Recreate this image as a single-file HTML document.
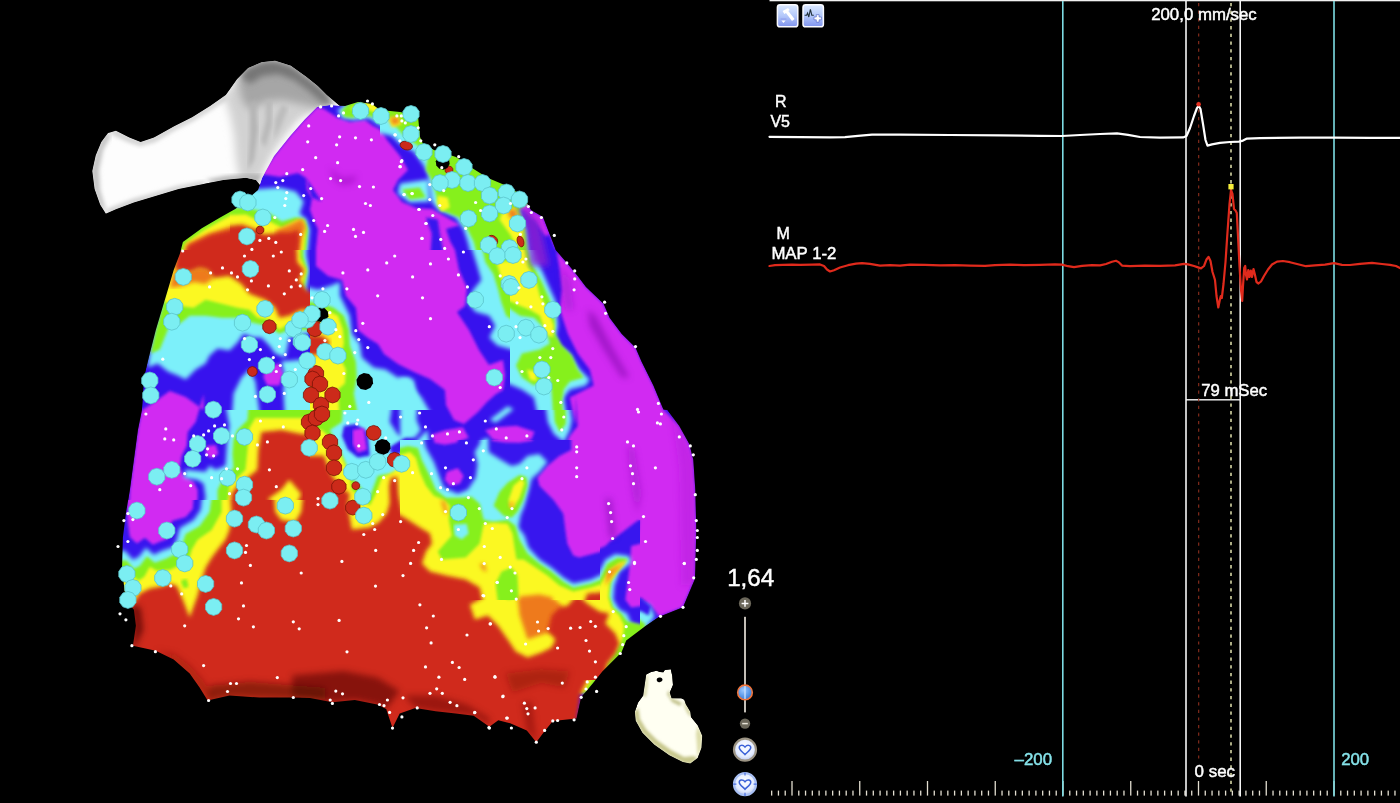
<!DOCTYPE html>
<html lang="en"><head><meta charset="utf-8"><title>Activation map</title>
<style>
html,body{margin:0;padding:0;background:#000;}
body{width:1400px;height:803px;overflow:hidden;position:relative;font-family:"Liberation Sans",Arial,Helvetica,sans-serif;color:#fff;}
svg{position:absolute;left:0;top:0;display:block;}
.t{position:absolute;white-space:nowrap;line-height:1;color:#fff;}
</style></head><body>

<svg width="1400" height="803" viewBox="0 0 1400 803" font-family="Liberation Sans, Arial, Helvetica, sans-serif">
<defs>
<filter id="b1" x="-5%" y="-5%" width="110%" height="110%"><feGaussianBlur stdDeviation="1.2"/></filter>
<filter id="b15" x="-5%" y="-5%" width="110%" height="110%"><feGaussianBlur stdDeviation="1.5"/></filter>
<filter id="b2" x="-5%" y="-5%" width="110%" height="110%"><feGaussianBlur stdDeviation="2"/></filter>
<filter id="b3" x="-5%" y="-5%" width="110%" height="110%"><feGaussianBlur stdDeviation="3"/></filter>
<filter id="b4" x="-20%" y="-20%" width="140%" height="140%"><feGaussianBlur stdDeviation="4"/></filter>
<filter id="b5" x="-10%" y="-10%" width="120%" height="120%"><feGaussianBlur stdDeviation="5"/></filter>
<filter id="b8" x="-20%" y="-20%" width="140%" height="140%"><feGaussianBlur stdDeviation="8"/></filter>
<filter id="s05" x="-5%" y="-5%" width="110%" height="110%"><feGaussianBlur stdDeviation="0.5"/></filter>
<mask id="sil" maskUnits="userSpaceOnUse" x="0" y="0" width="1400" height="803"><polygon points="317.0,107.0 330.0,105.0 345.0,106.0 358.0,102.0 372.0,104.0 380.0,110.0 400.0,112.0 418.0,116.0 420.0,137.0 423.0,144.0 434.0,150.0 456.0,157.0 472.0,168.0 488.0,178.0 507.0,186.0 523.0,196.0 531.0,210.0 543.0,217.0 555.8,250.0 567.8,264.0 577.7,276.0 586.0,287.0 603.6,303.8 609.6,317.7 621.6,333.7 635.5,347.6 641.5,361.6 653.4,385.5 663.4,409.4 667.4,410.0 679.3,426.0 689.3,443.9 693.3,459.8 695.3,489.7 696.3,529.5 695.3,569.4 694.9,578.9 683.0,607.3 659.3,616.8 645.1,626.3 626.2,640.5 621.5,652.3 602.5,671.2 593.1,683.1 581.2,697.3 576.5,718.6 552.8,720.9 543.4,732.8 536.3,742.2 526.8,730.4 510.2,723.3 498.3,720.2 489.4,726.7 473.7,715.7 455.7,713.5 435.6,711.3 415.4,707.9 399.7,713.5 392.5,728.0 386.2,709.0 377.3,704.5 354.8,700.0 332.4,702.3 310.0,698.0 293.3,697.5 259.4,697.5 229.5,695.5 207.6,700.5 199.6,687.5 189.7,673.6 173.7,659.6 155.8,650.7 132.9,645.7 135.9,625.8 133.9,609.8 125.9,599.9 122.0,570.0 122.9,537.5 125.9,513.6 129.9,489.7 133.9,459.8 137.9,430.0 141.9,410.0 143.9,377.5 149.8,353.6 155.8,330.0 161.8,310.0 167.8,290.0 173.7,270.0 179.9,253.7 182.9,242.1 201.8,228.2 219.7,217.8 235.7,208.8 250.0,197.0 258.0,190.0 262.0,178.0 274.0,156.0 290.0,136.0 305.0,119.0" fill="#fff"/></mask>
<clipPath id="tubeclip"><polygon points="92.3,171.0 95.7,155.4 101.3,142.0 108.0,133.0 115.9,130.7 129.3,137.5 140.6,142.0 154.0,137.5 174.2,126.3 192.1,117.3 210.1,106.1 225.8,94.9 237.0,79.2 248.2,68.0 261.7,62.3 275.1,60.8 290.8,65.7 306.5,76.9 317.7,85.9 326.7,94.9 345.0,110.0 325.0,135.0 300.0,160.0 280.0,185.0 262.0,188.0 256.0,180.0 246.0,177.8 223.5,180.0 201.1,184.6 178.7,189.0 156.3,195.8 133.8,202.5 115.9,209.2 105.8,213.7 100.2,204.7 94.6,189.0"/></clipPath>
<clipPath id="heartclip"><path d="M646.2,674.4 L651,672 L656.6,670.7 L660,672 L663.3,672.2 L664.8,670 L670.8,669.2 L672.3,676 L673,685 L669.8,692.4 L671.6,698.3 L681.3,698.3 L684.3,699.8 L685.8,704.3 L690.3,711.8 L691,717 L697.7,725.3 L702.2,735.7 L701.5,747.7 L697.7,758.1 L690.3,763.4 L682.8,761.9 L669.3,755.2 L654.4,744.7 L642.4,732.7 L635.7,720.8 L634.9,711.8 L637.9,702.8 L643.2,695.4 L644.7,684.9 Z"/></clipPath>
<linearGradient id="ic" x1="0" y1="0" x2="0" y2="1"><stop offset="0" stop-color="#dbe9ff"/><stop offset="0.5" stop-color="#b4c8fa"/><stop offset="1" stop-color="#7f93ee"/></linearGradient>
<radialGradient id="knob" cx="0.4" cy="0.35" r="0.7"><stop offset="0" stop-color="#9cc8ff"/><stop offset="1" stop-color="#2f78d8"/></radialGradient>
<radialGradient id="hb1" cx="0.5" cy="0.4" r="0.6"><stop offset="0" stop-color="#ffffff"/><stop offset="0.7" stop-color="#e4ecff"/><stop offset="1" stop-color="#b8c4e8"/></radialGradient>
</defs>
<g clip-path="url(#tubeclip)">
<polygon points="92.3,171.0 95.7,155.4 101.3,142.0 108.0,133.0 115.9,130.7 129.3,137.5 140.6,142.0 154.0,137.5 174.2,126.3 192.1,117.3 210.1,106.1 225.8,94.9 237.0,79.2 248.2,68.0 261.7,62.3 275.1,60.8 290.8,65.7 306.5,76.9 317.7,85.9 326.7,94.9 345.0,110.0 325.0,135.0 300.0,160.0 280.0,185.0 262.0,188.0 256.0,180.0 246.0,177.8 223.5,180.0 201.1,184.6 178.7,189.0 156.3,195.8 133.8,202.5 115.9,209.2 105.8,213.7 100.2,204.7 94.6,189.0" fill="#fdfdfd" />
<g filter="url(#b4)"><polygon points="224.0,96.0 237.0,79.0 248.0,68.0 262.0,62.0 275.0,61.0 291.0,66.0 306.0,77.0 318.0,86.0 327.0,95.0 333.0,106.0 318.0,112.0 300.0,120.0 286.0,136.0 272.0,156.0 262.0,176.0 250.0,182.0 240.0,181.0 236.0,160.0 234.0,135.0 230.0,115.0" fill="#d2d2d2" /></g>
<g filter="url(#b4)"><polygon points="238.0,80.0 248.0,68.0 262.0,62.0 275.0,61.0 291.0,66.0 306.0,77.0 318.0,86.0 327.0,95.0 333.0,106.0 318.0,108.0 300.0,104.0 282.0,100.0 264.0,102.0 250.0,110.0 242.0,100.0" fill="#a6a6a6" /></g>
<g filter="url(#b3)"><polygon points="240.0,76.0 248.0,68.0 262.0,62.0 275.0,61.0 291.0,66.0 306.0,77.0 318.0,86.0 327.0,95.0 333.0,106.0 322.0,102.0 308.0,90.0 294.0,80.0 278.0,74.0 262.0,76.0 250.0,84.0" fill="#767676" /></g>
<g filter="url(#b2)"><polygon points="250.0,104.0 256.0,100.0 258.0,130.0 254.0,160.0 248.0,170.0 250.0,135.0" fill="#b4b4b4" /></g>
<g filter="url(#b2)"><polygon points="266.0,100.0 272.0,100.0 272.0,125.0 265.0,148.0 261.0,140.0 266.0,120.0" fill="#b8b8b8" /></g>
<g filter="url(#b2)"><polygon points="282.0,104.0 288.0,108.0 281.0,126.0 274.0,140.0 275.0,120.0" fill="#bcbcbc" /></g>
<g filter="url(#b3)"><polygon points="300.0,120.0 320.0,110.0 332.0,107.0 298.0,132.0 282.0,152.0 270.0,172.0 264.0,174.0 278.0,148.0" fill="#f6f6f6" /></g>
<g filter="url(#b2)"><polygon points="215.0,183.0 246.0,179.0 258.0,183.0 262.0,174.0 250.0,174.0 226.0,176.0 205.0,180.0" fill="#b2b2b2" /></g>
<g filter="url(#b2)"><polygon points="105.0,215.0 134.0,204.0 156.0,197.0 179.0,190.0 205.0,185.0 205.0,181.0 178.0,186.0 155.0,193.0 133.0,199.0 108.0,209.0" fill="#cacaca" /></g>
<g filter="url(#b2)"><polygon points="91.0,171.0 95.0,155.0 100.0,142.0 107.0,132.0 111.0,136.0 103.0,150.0 99.0,170.0 100.0,190.0 107.0,214.0 99.0,205.0 93.6,189.0" fill="#c2c2c2" /></g>
<g filter="url(#b2)"><polygon points="108.0,132.0 116.0,129.5 129.0,136.5 141.0,141.0 154.0,136.5 174.0,125.0 192.0,116.0 210.0,105.0 226.0,94.0 228.0,99.0 211.0,110.0 193.0,121.0 175.0,130.0 155.0,142.0 140.0,146.0 128.0,142.0 115.0,136.0" fill="#cfcfcf" /></g>
</g>
<g mask="url(#sil)">
<polygon points="317.0,107.0 330.0,105.0 345.0,106.0 358.0,102.0 372.0,104.0 380.0,110.0 400.0,112.0 418.0,116.0 420.0,137.0 423.0,144.0 434.0,150.0 456.0,157.0 472.0,168.0 488.0,178.0 507.0,186.0 523.0,196.0 531.0,210.0 543.0,217.0 555.8,250.0 567.8,264.0 577.7,276.0 586.0,287.0 603.6,303.8 609.6,317.7 621.6,333.7 635.5,347.6 641.5,361.6 653.4,385.5 663.4,409.4 667.4,410.0 679.3,426.0 689.3,443.9 693.3,459.8 695.3,489.7 696.3,529.5 695.3,569.4 694.9,578.9 683.0,607.3 659.3,616.8 645.1,626.3 626.2,640.5 621.5,652.3 602.5,671.2 593.1,683.1 581.2,697.3 576.5,718.6 552.8,720.9 543.4,732.8 536.3,742.2 526.8,730.4 510.2,723.3 498.3,720.2 489.4,726.7 473.7,715.7 455.7,713.5 435.6,711.3 415.4,707.9 399.7,713.5 392.5,728.0 386.2,709.0 377.3,704.5 354.8,700.0 332.4,702.3 310.0,698.0 293.3,697.5 259.4,697.5 229.5,695.5 207.6,700.5 199.6,687.5 189.7,673.6 173.7,659.6 155.8,650.7 132.9,645.7 135.9,625.8 133.9,609.8 125.9,599.9 122.0,570.0 122.9,537.5 125.9,513.6 129.9,489.7 133.9,459.8 137.9,430.0 141.9,410.0 143.9,377.5 149.8,353.6 155.8,330.0 161.8,310.0 167.8,290.0 173.7,270.0 179.9,253.7 182.9,242.1 201.8,228.2 219.7,217.8 235.7,208.8 250.0,197.0 258.0,190.0 262.0,178.0 274.0,156.0 290.0,136.0 305.0,119.0" fill="#3712ee" />
<g filter="url(#b15)">
<polygon points="317.0,107.0 305.0,119.0 290.0,136.0 274.0,156.0 262.0,174.0 280.0,177.0 298.0,173.0 306.0,178.0 307.0,190.0 312.0,198.0 310.0,210.0 314.0,221.0 318.0,229.0 316.0,249.0 316.0,266.0 328.0,276.0 342.0,280.0 346.0,296.0 356.0,308.0 358.0,330.0 368.0,338.0 378.0,344.0 384.0,354.0 398.0,364.0 414.0,372.0 430.0,379.0 445.0,390.0 446.0,405.0 454.0,420.0 464.0,424.0 478.0,412.0 487.0,402.0 496.0,394.0 503.0,390.0 505.0,375.0 503.0,360.0 489.0,365.0 479.0,350.0 469.0,330.0 457.0,312.0 465.0,306.0 467.0,288.0 459.0,270.0 455.0,250.0 450.0,241.0 446.0,229.0 460.0,225.0 446.0,217.0 432.0,209.0 416.0,208.0 402.0,202.0 393.0,190.0 398.0,180.0 408.0,170.0 400.0,156.0 392.0,146.0 387.0,140.0 381.0,130.0 373.0,126.0 365.0,120.0 350.0,122.0 338.0,118.0 324.0,109.0" fill="#d12cf2" />
<polygon points="514.0,204.0 523.0,196.0 531.0,210.0 543.0,217.0 555.8,250.0 567.8,264.0 577.7,276.0 586.0,287.0 603.6,303.8 609.6,317.7 621.6,333.7 635.5,347.6 641.5,361.6 653.4,385.5 663.4,409.4 679.3,426.0 689.3,443.9 693.3,459.8 695.3,489.7 696.3,529.5 695.3,569.4 694.9,578.9 683.0,607.3 659.3,616.8 652.2,607.3 640.4,597.9 626.2,602.6 621.5,590.8 628.6,574.2 633.3,560.0 631.5,585.3 633.5,553.4 637.5,539.5 639.5,519.6 629.5,526.5 612.6,539.5 605.6,547.5 595.7,553.4 579.7,555.4 569.8,549.4 567.8,533.5 561.8,521.6 563.8,505.6 557.8,493.7 543.9,487.7 535.9,475.7 545.9,465.8 557.8,455.8 565.8,445.9 569.8,435.9 577.7,425.9 575.7,394.1 575.7,425.3 569.8,397.4 577.7,393.4 593.7,385.5 589.7,369.5 577.7,353.6 567.8,333.7 559.8,309.8 561.8,289.8 559.8,269.9 553.8,234.1 545.0,236.0 535.0,222.0 524.0,212.0" fill="#d12cf2" />
<polygon points="141.9,410.0 143.9,409.0 155.8,401.0 169.8,391.0 185.7,397.0 199.6,407.0 203.6,410.0 203.6,394.1 195.7,422.0 187.7,431.9 186.7,445.9 181.7,455.8 179.7,467.8 183.7,475.7 193.7,481.7 197.6,489.7 197.6,499.6 192.7,509.6 185.7,519.6 171.8,521.6 163.8,527.5 151.8,537.5 139.9,534.5 132.9,541.5 127.9,531.5 129.9,489.7 133.9,459.8 137.9,429.9" fill="#d12cf2" />
<polygon points="265.4,367.5 279.3,363.5 283.3,373.5 279.3,385.5 267.4,385.5 263.4,377.5" fill="#d12cf2" />
<polygon points="206.6,445.9 215.6,444.9 218.6,453.8 211.6,458.8 205.6,453.8" fill="#d12cf2" />
<polygon points="431.4,434.7 444.8,430.3 462.8,427.3 468.8,437.7 456.8,442.2 444.8,444.5 434.4,441.5" fill="#d12cf2" />
<polygon points="485.2,430.3 495.7,427.3 516.6,425.8 534.5,431.7 531.5,439.2 519.6,443.0 504.6,442.2 492.7,439.2" fill="#d12cf2" />
<polygon points="447.5,467.8 461.4,465.8 469.4,475.7 457.4,483.7 447.5,477.7" fill="#d12cf2" />
<polygon points="352.8,429.9 363.8,427.9 366.8,449.8 357.8,452.8 352.8,443.9" fill="#d12cf2" />
</g>
<g filter="url(#b2)">
<polygon points="400.0,377.9 413.5,379.4 417.9,397.4 416.4,419.8 420.9,430.3 414.9,437.7 400.0,440.7" fill="#7cf0fa" />
<polygon points="480.7,440.7 488.2,437.7 489.7,449.7 483.7,455.7" fill="#7cf0fa" />
<polygon points="489.7,419.8 507.6,406.3 513.6,409.3 495.7,422.8" fill="#7cf0fa" />
</g>
<clipPath id="tc_X1"><rect x="100" y="80" width="130" height="170"/></clipPath>
<g clip-path="url(#tc_X1)">
<g filter="url(#b2)">
<polygon points="150.0,170.0 237.6,170.0 237.6,257.6 150.0,257.6" fill="#7cf0fa" />
</g>
<g filter="url(#b15)">
<polygon points="150.0,170.0 237.6,170.0 237.6,257.6 150.0,257.6" fill="#86f01c" />
</g>
<g filter="url(#b15)">
<polygon points="237.6,212.2 220.7,220.8 202.8,231.0 184.9,243.7 181.9,257.6 237.6,257.6" fill="#fbf822" />
</g>
<g filter="url(#b2)">
<polygon points="237.6,223.8 209.8,233.3 186.9,244.1 183.5,257.6 237.6,257.6" fill="#ee7a1c" />
</g>
<g filter="url(#b2)">
<polygon points="237.6,228.2 209.8,234.9 187.8,245.7 184.3,257.6 237.6,257.6" fill="#d0291b" />
</g>
</g>
<clipPath id="tc_A2"><rect x="230" y="80" width="150" height="170"/></clipPath>
<g clip-path="url(#tc_A2)">
<g filter="url(#b2)">
<polygon points="214.1,201.6 236.0,197.6 251.9,189.6 279.8,187.6 295.7,191.6 303.7,201.6 299.7,213.5 306.7,219.5 309.7,229.4 306.7,265.3 214.1,265.3" fill="#7cf0fa" />
<polygon points="337.6,109.9 341.6,117.9 353.5,119.9 369.4,117.9 377.4,123.9 389.4,129.8 397.3,137.8 403.3,147.8 409.3,157.7 417.3,167.7 445.9,173.7 445.9,102.0 417.3,102.0 369.4,98.0 349.5,102.0" fill="#7cf0fa" />
<polygon points="401.3,183.6 445.9,179.6 445.9,205.5 409.3,202.5 399.3,195.6" fill="#7cf0fa" />
</g>
<g filter="url(#b15)">
<polygon points="305.7,177.6 321.6,201.6 311.7,197.6" fill="#3712ee" />
</g>
<g filter="url(#b15)">
<polygon points="214.1,209.5 242.0,207.5 253.9,209.5 269.8,213.5 281.8,221.5 295.7,217.5 304.7,219.5 307.7,229.4 304.7,265.3 214.1,265.3" fill="#86f01c" />
<polygon points="341.6,110.9 344.5,116.9 353.5,117.9 357.5,113.9 369.4,115.9 381.4,119.9 393.3,121.9 405.3,129.8 401.3,137.8 409.3,147.8 417.3,155.7 445.9,159.7 445.9,102.0 417.3,102.0 369.4,98.0 349.5,102.0" fill="#86f01c" />
<polygon points="404.3,188.6 421.2,187.6 445.9,189.6 445.9,201.6 411.3,199.6 403.3,194.6" fill="#86f01c" />
</g>
<g filter="url(#b15)">
<polygon points="214.1,215.5 245.9,214.5 255.9,219.5 269.8,221.5 281.8,227.5 297.7,219.5 303.7,220.5 305.7,229.4 302.7,265.3 214.1,265.3" fill="#fbf822" />
<polygon points="349.5,107.9 357.5,111.9 369.4,109.9 381.4,115.9 389.4,119.9 399.3,123.9 405.3,121.9 409.3,115.9 401.3,113.9 381.4,107.9 369.4,102.0" fill="#fbf822" />
</g>
<g filter="url(#b2)">
<polygon points="275.8,230.4 289.8,224.5 302.1,218.7 305.7,227.5 300.9,239.4 298.1,265.3 279.8,265.3" fill="#ee7a1c" />
</g>
<g filter="url(#b2)">
<polygon points="214.1,227.5 242.0,224.5 255.9,229.4 263.9,234.4 279.8,232.4 289.8,232.4 298.7,229.4 299.7,239.4 296.7,265.3 214.1,265.3" fill="#d0291b" />
<polygon points="387.4,113.9 395.3,119.9 401.3,121.9 405.3,117.9 399.3,113.9" fill="#d0291b" />
</g>
</g>
<clipPath id="tc_B2"><rect x="380" y="80" width="340" height="170"/></clipPath>
<g clip-path="url(#tc_B2)">
<g filter="url(#b2)">
<polygon points="364.1,129.8 392.0,135.8 399.9,143.8 413.9,151.8 423.8,165.7 427.8,173.7 429.8,185.6 431.8,201.6 437.8,209.5 455.7,217.5 463.7,229.4 467.6,241.4 473.6,265.3 531.4,265.3 527.4,229.4 519.4,207.5 531.4,201.6 507.5,177.6 455.7,149.8 419.8,109.9 364.1,102.0" fill="#7cf0fa" />
<polygon points="399.9,183.6 427.8,179.6 429.8,201.6 409.9,202.5 397.9,193.6" fill="#7cf0fa" />
</g>
<g filter="url(#b15)">
<polygon points="425.8,217.5 437.8,219.5 439.8,233.4 445.7,265.3 429.8,265.3 431.8,233.4" fill="#3712ee" />
</g>
<g filter="url(#b15)">
<polygon points="364.1,102.0 392.0,121.9 403.9,135.8 417.8,145.8 427.8,157.7 425.8,169.7 431.8,179.6 435.8,193.6 439.8,209.5 459.7,217.5 467.6,229.4 473.6,241.4 479.6,265.3 529.4,265.3 525.4,229.4 519.4,209.5 531.4,201.6 507.5,177.6 455.7,149.8 419.8,109.9" fill="#86f01c" />
<polygon points="401.9,189.6 419.8,187.6 425.8,197.6 409.9,199.6" fill="#86f01c" />
</g>
<g filter="url(#b15)">
<polygon points="388.0,117.9 397.9,115.9 401.9,123.9 392.0,127.8" fill="#fbf822" />
<polygon points="437.8,195.6 447.7,197.6 449.7,207.5 441.8,211.5 436.8,203.5" fill="#fbf822" />
<polygon points="503.5,209.5 515.5,207.5 523.4,229.4 523.4,243.4 517.5,247.4 509.5,233.4 499.5,219.5" fill="#fbf822" />
</g>
<g filter="url(#b2)">
<polygon points="390.0,117.9 397.9,116.9 399.9,122.9 392.9,124.9" fill="#ee7a1c" />
<polygon points="507.5,209.5 515.5,209.5 517.5,219.5 509.5,217.5" fill="#ee7a1c" />
</g>
</g>
<clipPath id="tc_R2C1"><rect x="100" y="250" width="210" height="160"/></clipPath>
<g clip-path="url(#tc_R2C1)">
<g filter="url(#b2)">
<polygon points="149.8,353.6 147.8,367.5 157.8,363.5 167.8,371.5 177.7,375.5 185.7,379.5 195.7,369.5 205.6,363.5 209.6,355.6 217.6,348.6 229.5,350.6 237.5,342.6 243.5,333.7 253.4,337.6 261.4,337.6 269.4,345.6 275.3,353.6 285.3,357.6 289.3,337.6 325.9,329.7 325.9,316.7 308.2,299.8 306.6,287.8 309.2,269.9 306.6,256.0 307.2,222.1 179.7,222.1 169.8,269.9" fill="#7cf0fa" />
<polygon points="231.5,425.3 233.5,393.4 241.5,377.5 249.4,369.5 255.4,381.5 257.4,397.4 261.4,425.3" fill="#7cf0fa" />
<polygon points="281.3,361.6 325.9,357.6 325.9,425.3 285.3,425.3 283.3,389.4 285.3,377.5" fill="#7cf0fa" />
</g>
<g filter="url(#b15)">
<polygon points="179.7,222.1 161.8,309.8 159.8,317.7 169.8,321.7 179.7,323.7 189.7,315.7 205.6,315.7 221.6,317.7 237.5,317.7 249.4,321.7 257.4,323.7 267.4,325.7 279.3,333.7 289.3,329.7 325.9,329.7 325.9,318.7 306.2,299.8 304.2,287.8 307.2,269.9 303.2,256.0 303.6,222.1" fill="#86f01c" />
<polygon points="161.8,309.8 169.8,317.7 167.8,329.7 159.8,349.6 150.8,353.6 155.8,329.7" fill="#86f01c" />
</g>
<g filter="url(#b15)">
<polygon points="179.7,222.1 163.8,301.8 177.7,305.8 193.7,307.8 205.6,299.8 221.6,303.8 237.5,307.8 249.4,309.8 257.4,317.7 269.4,319.7 279.3,329.7 289.3,323.7 325.9,315.7 304.2,299.8 302.2,287.8 306.2,269.9 300.2,258.0 300.2,222.1" fill="#fbf822" />
</g>
<g filter="url(#b2)">
<polygon points="173.7,271.9 189.7,271.9 199.6,267.9 207.6,269.9 213.6,277.9 205.6,283.9 193.7,281.9 181.7,285.9 169.8,287.8" fill="#ee7a1c" />
</g>
<g filter="url(#b2)">
<polygon points="179.7,222.1 174.7,269.9 189.7,271.9 199.6,267.9 207.6,269.9 213.6,277.9 229.5,275.9 241.5,283.9 249.4,293.8 265.4,299.8 275.3,307.8 279.3,317.7 289.3,315.7 301.2,309.8 325.9,309.8 325.9,297.8 306.2,289.8 299.2,279.9 304.2,269.9 297.3,262.0 295.3,222.1" fill="#d0291b" />
</g>
</g>
<clipPath id="tc_R2C2"><rect x="310" y="250" width="200" height="160"/></clipPath>
<g clip-path="url(#tc_R2C2)">
<g filter="url(#b2)">
<polygon points="294.1,283.9 318.0,289.8 329.9,285.9 339.9,281.9 339.9,295.8 345.9,307.8 349.8,315.7 351.8,333.7 359.8,343.6 361.8,357.6 373.7,367.5 385.7,369.5 397.6,377.5 409.6,377.5 413.6,389.4 421.6,397.4 437.5,425.3 437.5,429.3 294.1,429.3" fill="#7cf0fa" />
<polygon points="467.4,234.1 477.3,265.9 481.3,279.9 473.3,289.8 467.4,301.8 475.3,311.8 489.3,315.7 495.3,325.7 489.3,337.6 497.3,345.6 525.9,353.6 525.9,234.1" fill="#7cf0fa" />
</g>
<g filter="url(#b15)">
<polygon points="294.1,299.8 322.0,303.8 333.9,307.8 343.9,315.7 348.8,329.7 349.8,345.6 355.8,361.6 356.8,377.5 353.8,393.4 359.8,425.3 359.8,429.3 294.1,429.3" fill="#86f01c" />
<polygon points="479.3,234.1 485.3,262.0 493.3,273.9 498.2,289.8 501.2,301.8 506.2,315.7 525.9,329.7 525.9,234.1" fill="#86f01c" />
</g>
<g filter="url(#b15)">
<polygon points="294.1,307.8 325.9,309.8 337.9,315.7 342.9,329.7 343.9,343.6 339.9,357.6 345.9,369.5 344.9,383.5 337.9,389.4 339.9,425.3 339.9,429.3 294.1,429.3" fill="#fbf822" />
<polygon points="496.3,262.0 525.9,260.0 525.9,301.8 506.2,289.8 501.2,277.9" fill="#fbf822" />
</g>
<g filter="url(#b2)">
<polygon points="294.1,333.7 322.0,335.7 329.9,341.6 323.9,353.6 294.1,357.6" fill="#d0291b" />
</g>
</g>
<clipPath id="tc_R2C3"><rect x="510" y="250" width="210" height="160"/></clipPath>
<g clip-path="url(#tc_R2C3)">
<g filter="url(#b2)">
<polygon points="494.1,234.1 529.9,234.1 539.9,265.9 547.8,283.9 555.8,301.8 557.8,325.7 555.8,335.7 559.8,345.6 569.8,353.6 579.7,369.5 589.7,379.5 585.7,385.5 569.8,389.4 563.8,397.4 567.8,425.3 539.9,425.3 533.9,397.4 522.0,389.4 494.1,377.5" fill="#7cf0fa" />
</g>
<g filter="url(#b15)">
<polygon points="494.1,234.1 523.9,234.1 531.9,263.9 541.9,281.9 549.8,299.8 554.8,319.7 554.8,333.7 561.8,345.6 571.8,355.6 577.7,369.5 583.7,377.5 569.8,381.5 563.8,389.4 561.8,401.4 564.8,425.3 553.8,425.3 551.8,393.4 549.8,377.5 533.9,385.5 522.0,377.5 516.0,365.5 522.0,353.6 539.9,349.6 549.8,343.6 545.9,329.7 533.9,317.7 520.0,315.7 494.1,297.8" fill="#86f01c" />
</g>
<g filter="url(#b15)">
<polygon points="494.1,234.1 522.0,234.1 527.9,265.9 535.9,279.9 539.9,295.8 547.8,309.8 553.8,325.7 552.8,337.6 545.9,333.7 539.9,315.7 529.9,309.8 520.0,305.8 494.1,293.8" fill="#fbf822" />
<polygon points="526.9,369.5 535.9,371.5 536.9,381.5 529.9,379.5" fill="#fbf822" />
</g>
</g>
<clipPath id="tc_R3C1"><rect x="100" y="410" width="210" height="160"/></clipPath>
<g clip-path="url(#tc_R3C1)">
<g filter="url(#b2)">
<polygon points="223.5,394.1 229.5,425.9 227.5,435.9 226.5,449.8 225.5,465.8 215.6,469.8 209.6,465.8 205.6,471.8 185.7,469.8 183.7,477.7 197.6,479.7 203.6,483.7 205.6,497.6 201.6,511.6 193.7,521.6 177.7,529.5 169.8,537.5 167.8,545.5 153.8,549.4 141.9,545.5 131.9,553.4 125.9,547.5 118.0,591.3 325.9,591.3 325.9,394.1" fill="#7cf0fa" />
</g>
<g filter="url(#b15)">
<polygon points="249.4,394.1 247.5,420.0 237.5,429.9 233.5,439.9 232.5,453.8 233.5,467.8 221.6,481.7 217.6,489.7 217.6,503.6 213.6,513.6 203.6,523.5 189.7,529.5 179.7,537.5 175.7,549.4 159.8,557.4 145.9,555.4 133.9,563.4 126.9,559.4 118.0,591.3 325.9,591.3 325.9,394.1" fill="#86f01c" />
<polygon points="122.0,525.5 127.9,527.5 126.9,559.4 121.0,585.3" fill="#86f01c" />
</g>
<g filter="url(#b15)">
<polygon points="255.4,418.0 249.4,427.9 247.5,449.8 245.5,469.8 229.5,485.7 227.5,503.6 223.5,515.6 209.6,527.5 197.6,533.5 189.7,545.5 181.7,557.4 159.8,565.4 149.8,591.3 325.9,591.3 325.9,418.0" fill="#fbf822" />
</g>
<g filter="url(#b2)">
<polygon points="261.4,431.9 258.4,449.8 257.4,469.8 237.5,485.7 231.5,493.7 230.5,513.6 229.5,529.5 231.5,537.5 221.6,545.5 213.6,553.4 203.6,557.4 195.7,591.3 325.9,591.3 325.9,435.9 301.2,433.9 281.3,429.9" fill="#d0291b" />
</g>
<g filter="url(#b2)">
<polygon points="289.3,479.7 301.2,493.7 297.3,503.6 295.3,515.6 281.3,521.6 273.3,521.6 275.3,503.6 267.4,499.6 281.3,489.7" fill="#fbf822" />
</g>
</g>
<clipPath id="tc_R3C2"><rect x="310" y="410" width="200" height="160"/></clipPath>
<g clip-path="url(#tc_R3C2)">
<g filter="url(#b2)">
<polygon points="294.1,394.1 393.7,394.1 389.7,422.0 397.6,433.9 405.6,437.9 389.7,449.8 393.7,455.8 417.6,439.9 427.5,429.9 429.5,445.9 437.5,461.8 439.5,477.7 449.4,489.7 465.4,491.7 475.3,479.7 483.3,461.8 489.3,455.8 525.9,469.8 525.9,585.3 294.1,585.3" fill="#7cf0fa" />
</g>
<g filter="url(#b15)">
<polygon points="343.9,425.9 355.8,423.9 367.8,431.9 369.8,455.8 357.8,457.8 347.8,449.8 341.9,435.9" fill="#3712ee" />
<polygon points="389.7,447.8 405.6,437.9 417.6,439.9 395.7,454.8" fill="#3712ee" />
</g>
<g filter="url(#b15)">
<polygon points="352.8,429.9 363.8,427.9 366.8,449.8 357.8,452.8 352.8,443.9" fill="#d12cf2" />
</g>
<g filter="url(#b15)">
<polygon points="294.1,394.1 343.9,394.1 341.9,422.0 329.9,429.9 337.9,445.9 344.9,461.8 349.8,475.7 369.8,497.6 377.7,475.7 389.7,473.7 399.6,469.8 407.6,457.8 417.6,445.9 421.6,449.8 425.5,461.8 429.5,477.7 437.5,493.7 449.4,497.6 469.4,497.6 489.3,503.6 525.9,501.6 525.9,521.6 489.3,517.6 525.9,533.5 525.9,585.3 294.1,585.3" fill="#86f01c" />
</g>
<g filter="url(#b15)">
<polygon points="453.4,523.5 465.4,525.5 463.4,537.5 455.4,537.5" fill="#7cf0fa" />
<polygon points="489.3,517.6 525.9,509.6 525.9,521.6 497.3,523.5" fill="#7cf0fa" />
</g>
<g filter="url(#b15)">
<polygon points="294.1,427.9 322.0,429.9 335.9,443.9 343.9,461.8 349.8,475.7 351.8,489.7 369.8,505.6 375.7,493.7 381.7,477.7 393.7,471.8 405.6,461.8 413.6,449.8 418.6,455.8 421.6,469.8 427.5,481.7 433.5,497.6 437.5,505.6 449.4,503.6 453.4,517.6 447.5,529.5 449.4,545.5 439.5,557.4 437.5,585.3 294.1,585.3" fill="#fbf822" />
<polygon points="477.3,537.5 489.3,523.5 525.9,521.6 525.9,585.3 467.4,585.3 469.4,549.4" fill="#fbf822" />
</g>
<g filter="url(#b2)">
<polygon points="294.1,455.8 323.9,455.8 331.9,475.7 343.9,489.7 349.8,493.7 347.8,505.6 351.8,529.5 369.8,527.5 378.7,522.5 386.7,513.6 389.7,503.6 389.1,485.7 390.7,477.7 397.3,476.7 398.6,495.7 401.6,509.6 406.6,518.6 414.6,527.5 429.5,533.5 431.5,545.5 421.6,553.4 418.6,585.3 294.1,585.3" fill="#d0291b" />
</g>
</g>
<clipPath id="tc_R3C3"><rect x="510" y="410" width="210" height="160"/></clipPath>
<g clip-path="url(#tc_R3C3)">
<g filter="url(#b2)">
<polygon points="543.9,394.1 547.8,422.0 553.8,433.9 563.8,441.9 569.8,429.9 571.8,420.0 567.8,394.1 566.8,390.1 541.9,390.1" fill="#7cf0fa" />
<polygon points="494.1,465.8 522.0,455.8 531.9,450.8 543.9,459.8 535.9,469.8 530.9,481.7 528.9,497.6 524.9,513.6 529.9,529.5 528.9,541.5 537.9,549.4 549.8,557.4 561.8,563.4 569.8,585.3 569.8,591.3 494.1,591.3" fill="#7cf0fa" />
<polygon points="597.6,585.3 603.6,549.4 611.6,541.5 621.6,547.5 631.5,557.4 631.5,591.3 597.6,591.3" fill="#7cf0fa" />
</g>
<g filter="url(#b15)">
<polygon points="552.8,390.1 554.8,422.0 559.8,431.9 565.8,423.9 565.8,390.1" fill="#86f01c" />
<polygon points="494.1,475.7 520.0,471.8 527.9,476.7 525.9,493.7 520.0,509.6 512.0,517.6 494.1,517.6" fill="#86f01c" />
<polygon points="494.1,553.4 522.0,551.4 535.9,557.4 549.8,561.4 557.8,585.3 557.8,591.3 494.1,591.3" fill="#86f01c" />
<polygon points="601.6,591.3 607.6,553.4 615.6,549.4 625.5,555.4 629.5,561.4 629.5,591.3" fill="#86f01c" />
</g>
<g filter="url(#b15)">
<polygon points="494.1,481.7 518.0,475.7 524.9,479.7 522.0,495.7 514.0,509.6 494.1,509.6" fill="#fbf822" />
<polygon points="605.6,591.3 613.6,557.4 627.5,559.4 628.5,591.3" fill="#fbf822" />
</g>
<g filter="url(#b2)">
<polygon points="609.6,591.3 617.6,563.4 628.5,561.4 627.5,591.3" fill="#ee7a1c" />
</g>
<g filter="url(#b2)">
<polygon points="494.1,503.6 516.0,497.6 514.0,509.6 494.1,511.6" fill="#d0291b" />
</g>
</g>
<clipPath id="tc_R4C1"><rect x="100" y="570" width="210" height="190"/></clipPath>
<g clip-path="url(#tc_R4C1)">
<g filter="url(#b2)">
<polygon points="82.1,552.1 327.1,552.1 327.1,775.2 82.1,775.2" fill="#7cf0fa" />
</g>
<g filter="url(#b15)">
<polygon points="82.1,552.1 327.1,552.1 327.1,775.2 82.1,775.2" fill="#86f01c" />
</g>
<g filter="url(#b15)">
<polygon points="129.9,554.1 135.9,589.9 143.9,593.9 153.8,582.0 157.8,554.1" fill="#fbf822" />
<polygon points="167.8,554.1 175.7,582.0 183.7,591.9 189.7,613.8 195.7,595.9 199.6,580.0 217.6,554.1" fill="#fbf822" />
<polygon points="82.1,552.1 327.1,552.1 327.1,775.2 82.1,775.2" fill="#fbf822" />
</g>
<g filter="url(#b15)">
<polygon points="131.9,554.1 139.9,582.0 149.8,576.0 153.8,554.1" fill="#86f01c" />
<polygon points="177.7,554.1 180.7,580.0 186.7,587.9 189.7,578.0 187.7,554.1" fill="#86f01c" />
</g>
<g filter="url(#b2)">
<polygon points="116.0,745.3 116.0,612.8 129.9,607.8 139.9,593.9 149.8,591.9 157.8,585.9 169.8,589.9 175.7,583.9 183.7,593.9 189.7,609.8 193.7,595.9 197.6,582.0 209.6,554.1 325.9,554.1 325.9,745.3 129.9,745.3" fill="#d0291b" />
</g>
</g>
<clipPath id="tc_R4C2"><rect x="310" y="570" width="200" height="190"/></clipPath>
<g clip-path="url(#tc_R4C2)">
<g filter="url(#b2)">
<polygon points="289.8,549.8 529.7,549.8 529.7,771.8 289.8,771.8" fill="#7cf0fa" />
</g>
<g filter="url(#b15)">
<polygon points="289.8,549.8 529.7,549.8 529.7,771.8 289.8,771.8" fill="#86f01c" />
</g>
<g filter="url(#b15)">
<polygon points="289.8,549.8 529.7,549.8 529.7,771.8 289.8,771.8" fill="#fbf822" />
</g>
<g filter="url(#b15)">
<polygon points="498.3,579.0 527.9,574.5 527.9,596.9 500.6,592.4" fill="#86f01c" />
</g>
<g filter="url(#b2)">
<polygon points="280.9,545.3 419.9,545.3 419.9,552.1 431.1,581.2 444.5,579.0 458.0,576.7 471.4,583.5 484.9,594.7 475.9,608.1 467.0,610.4 475.9,621.6 489.4,619.3 500.6,628.3 527.9,644.0 527.9,767.3 280.9,767.3" fill="#d0291b" />
</g>
</g>
<clipPath id="tc_R4C3"><rect x="510" y="570" width="210" height="190"/></clipPath>
<g clip-path="url(#tc_R4C3)">
<g filter="url(#b2)">
<polygon points="543.4,560.0 550.5,569.5 564.7,581.3 578.9,586.0 593.1,583.7 600.2,569.5 604.9,560.0 633.3,560.0 628.6,574.2 621.5,583.7 623.8,593.1 635.7,600.2 649.9,605.0 654.6,616.8 645.1,628.6 588.3,692.5 458.2,692.5 458.2,560.0" fill="#7cf0fa" />
</g>
<g filter="url(#b15)">
<polygon points="614.4,583.7 623.8,577.8 630.9,589.6 626.2,602.6 640.4,597.9 651.1,606.2 648.7,615.6 640.4,610.9 630.9,614.4 621.5,613.3 614.4,605.0 612.0,593.1" fill="#3712ee" />
</g>
<g filter="url(#b15)">
<polygon points="526.8,560.0 536.3,569.5 548.1,578.9 562.3,586.0 578.9,590.8 595.4,588.4 602.5,576.6 608.5,567.1 612.0,569.5 609.6,583.7 607.3,597.9 612.0,612.1 621.5,619.2 635.7,616.8 645.1,623.9 645.1,628.6 588.3,692.5 458.2,692.5 458.2,560.0" fill="#86f01c" />
</g>
<g filter="url(#b15)">
<polygon points="470.0,567.1 484.2,560.0 496.0,560.0 498.4,583.7 505.5,597.9 515.0,600.2 517.3,583.7 516.2,567.1 529.2,564.7 538.6,574.2 550.5,583.7 564.7,589.6 578.9,594.3 595.4,592.0 602.5,581.3 609.6,571.8 612.0,586.0 609.6,600.2 614.4,614.4 621.5,623.9 623.8,638.1 619.1,649.9 602.5,666.5 593.1,678.3 583.6,692.5 458.2,692.5 458.2,567.1" fill="#fbf822" />
<polygon points="604.9,564.7 630.9,564.7 626.2,576.6 612.0,578.9" fill="#fbf822" />
</g>
<g filter="url(#b2)">
<polygon points="520.9,601.4 541.0,595.5 557.6,607.3 550.5,619.2 545.7,631.0 536.3,638.1 526.8,631.0 522.1,616.8" fill="#ee7a1c" />
<polygon points="602.5,583.7 621.5,569.5 628.6,571.8 612.0,586.0" fill="#ee7a1c" />
</g>
<g filter="url(#b2)">
<polygon points="470.0,581.3 481.8,583.7 486.6,595.5 479.5,607.3 470.0,609.7 458.2,609.7 458.2,581.3" fill="#d0291b" />
<polygon points="470.0,621.5 484.2,614.4 496.0,628.6 507.9,638.1 517.3,652.3 526.8,659.4 541.0,654.7 550.5,638.1 548.1,628.6 557.6,614.4 569.4,605.0 578.9,597.9 588.3,607.3 602.5,612.1 609.6,619.2 612.0,631.0 607.3,645.2 597.8,659.4 590.7,673.6 581.2,692.5 576.5,725.7 574.1,761.2 458.2,761.2 458.2,621.5" fill="#d0291b" />
</g>
</g>
<clipPath id="tc_Q1"><rect x="440" y="520" width="200" height="160"/></clipPath>
<g clip-path="url(#tc_Q1)">
<g filter="url(#b1)">
<polygon points="408.1,488.1 671.9,488.1 671.9,715.2 408.1,715.2" fill="#3712ee" />
</g>
<g filter="url(#b15)">
<polygon points="561.5,504.1 611.3,504.1 613.3,537.9 605.3,545.9 591.4,551.9 579.4,557.8 571.5,551.9 567.5,539.9" fill="#d12cf2" />
<polygon points="610.3,488.1 671.9,488.1 671.9,502.1 636.6,521.2 611.5,540.5 609.3,532.0" fill="#d12cf2" />
<polygon points="631.2,545.9 655.9,539.9 655.9,603.7 631.2,607.6 625.3,599.7 627.3,585.7 629.2,569.8" fill="#d12cf2" />
</g>
<g filter="url(#b2)">
<polygon points="424.1,504.1 525.7,504.1 529.6,532.0 535.6,539.9 545.6,545.9 551.6,559.8 561.5,571.8 569.5,579.8 579.4,581.8 593.4,583.7 599.4,571.8 605.3,559.8 615.3,553.9 629.2,555.9 631.2,562.8 619.3,571.8 614.3,585.7 613.3,599.7 619.3,609.6 627.3,613.6 631.2,623.6 655.9,631.6 655.9,695.9 424.1,695.9" fill="#7cf0fa" />
</g>
<g filter="url(#b15)">
<polygon points="424.1,504.1 519.7,504.1 521.7,532.0 517.7,545.9 519.7,555.9 533.6,557.8 547.6,563.8 555.5,573.8 565.5,583.7 579.4,586.7 595.4,587.7 601.4,575.8 607.3,563.8 617.3,557.8 628.2,558.8 619.3,568.8 611.3,579.8 609.3,595.7 613.3,607.6 621.3,613.6 627.3,621.6 655.9,627.6 655.9,695.9 424.1,695.9" fill="#86f01c" />
</g>
<g filter="url(#b15)">
<polygon points="452.0,525.0 465.9,524.0 467.9,533.9 457.9,537.9 451.0,532.0" fill="#7cf0fa" />
</g>
<g filter="url(#b15)">
<polygon points="424.1,504.1 448.0,504.1 450.0,528.0 424.1,532.0" fill="#fbf822" />
<polygon points="477.8,504.1 505.7,504.1 505.7,532.0 499.8,549.9 497.8,565.8 495.8,579.8 499.8,589.7 507.7,599.7 515.7,597.7 516.7,579.8 513.7,569.8 523.7,567.8 539.6,571.8 551.6,577.8 563.5,587.7 579.4,590.7 595.4,591.7 603.3,579.8 609.3,569.8 619.3,562.8 627.3,560.8 617.3,571.8 609.3,583.7 608.3,597.7 611.3,607.6 619.3,615.6 624.3,625.6 622.3,639.5 615.3,651.5 607.3,663.4 599.4,695.9 424.1,695.9 424.1,565.8 448.0,559.8 459.9,557.8 471.9,547.9 479.8,532.0" fill="#fbf822" />
</g>
<g filter="url(#b2)">
<polygon points="517.7,597.7 543.6,593.7 555.5,599.7 563.5,607.6 559.5,619.6 551.6,631.6 539.6,635.5 527.6,639.5 519.7,615.6" fill="#ee7a1c" />
<polygon points="607.3,571.8 625.3,561.8 613.3,573.8 605.3,585.7" fill="#ee7a1c" />
</g>
<g filter="url(#b2)">
<polygon points="424.1,576.8 455.9,572.8 467.9,577.8 483.8,589.7 482.8,597.7 469.9,604.7 474.9,619.6 487.8,615.6 497.8,625.6 507.7,639.5 515.7,651.5 527.6,657.5 541.6,652.5 551.6,647.5 555.5,639.5 547.6,631.6 551.6,615.6 559.5,607.6 567.5,605.7 577.5,594.7 587.4,603.7 599.4,611.6 609.3,613.6 605.3,623.6 615.3,633.5 619.3,643.5 615.3,653.5 607.3,663.4 599.4,695.9 424.1,695.9" fill="#d0291b" />
</g>
</g>
<clipPath id="tc_Q2"><rect x="100" y="500" width="210" height="160"/></clipPath>
<g clip-path="url(#tc_Q2)">
<g filter="url(#b1)">
<polygon points="78.1,468.1 341.9,468.1 341.9,695.2 78.1,695.2" fill="#3712ee" />
</g>
<g filter="url(#b15)">
<polygon points="126.9,484.1 194.7,484.1 192.7,509.0 185.7,516.9 171.8,520.9 169.8,529.9 167.8,538.8 159.8,541.8 152.8,544.8 144.9,537.8 136.9,543.4 129.9,536.9 127.5,519.9" fill="#d12cf2" />
</g>
<g filter="url(#b2)">
<polygon points="203.6,484.1 200.6,510.0 193.7,519.9 179.7,527.9 176.7,539.8 173.7,546.8 161.8,550.8 153.8,554.8 145.9,547.8 138.9,556.8 132.9,559.8 124.9,550.8 94.1,551.8 94.1,675.9 325.9,675.9 325.9,484.1" fill="#7cf0fa" />
</g>
<g filter="url(#b15)">
<polygon points="213.6,484.1 209.6,512.0 199.6,525.9 185.7,533.9 181.7,545.8 177.7,552.8 165.8,558.8 154.8,562.7 146.9,556.2 139.9,565.7 133.9,568.7 126.9,560.8 94.1,557.8 94.1,675.9 325.9,675.9 325.9,484.1" fill="#86f01c" />
</g>
<g filter="url(#b15)">
<polygon points="221.6,484.1 221.6,512.0 211.6,529.9 197.6,539.8 191.7,549.8 188.7,559.8 176.7,566.7 169.8,569.7 156.8,570.7 149.8,566.7 144.3,576.7 138.3,580.7 130.9,573.7 94.1,575.7 94.1,675.9 325.9,675.9 325.9,484.1" fill="#fbf822" />
</g>
<g filter="url(#b15)">
<polygon points="180.7,580.7 186.7,578.7 188.7,586.7 183.7,588.6" fill="#86f01c" />
</g>
<g filter="url(#b2)">
<polygon points="229.5,484.1 231.5,512.0 229.5,529.9 225.5,539.8 217.6,549.8 211.6,557.8 205.6,567.7 200.6,583.7 197.6,595.6 189.7,617.5 182.7,599.6 176.7,585.7 169.8,583.7 159.8,586.7 149.8,588.6 139.9,593.6 132.9,603.6 94.1,611.6 94.1,675.9 325.9,675.9 325.9,484.1" fill="#d0291b" />
</g>
<g filter="url(#b2)">
<polygon points="273.3,484.1 275.3,512.0 281.3,519.9 295.3,521.9 301.2,512.0 304.2,484.1" fill="#fbf822" />
</g>
</g>
<clipPath id="tc_Q3"><rect x="400" y="440" width="200" height="160"/></clipPath>
<g clip-path="url(#tc_Q3)">
<g filter="url(#b1)">
<polygon points="368.1,408.1 631.9,408.1 631.9,635.2 368.1,635.2" fill="#3712ee" />
</g>
<g filter="url(#b15)">
<polygon points="571.3,424.1 615.9,424.1 615.9,547.6 579.3,557.5 573.3,555.5 567.3,543.6 565.3,529.6 563.3,513.7 553.4,499.8 539.4,485.8 537.5,477.8 547.4,465.9 559.4,455.9 571.3,450.0" fill="#d12cf2" />
<polygon points="446.8,471.9 457.8,467.9 463.7,475.9 459.8,483.8 449.8,485.8 444.8,479.8" fill="#d12cf2" />
<polygon points="434.3,442.8 444.8,444.8 456.8,442.4 468.7,421.9 468.7,408.1 431.3,408.1 431.3,418.9" fill="#d12cf2" />
<polygon points="492.0,440.8 504.6,442.6 519.5,442.8 532.5,440.8 537.5,408.1 487.6,408.1" fill="#d12cf2" />
</g>
<g filter="url(#b2)">
<polygon points="384.1,424.1 419.9,424.1 425.9,448.0 433.9,461.9 439.8,477.8 443.8,487.8 457.8,493.8 467.7,489.8 475.7,477.8 477.7,463.9 474.7,452.0 479.7,444.0 483.7,424.1 487.6,424.1 488.6,452.0 499.6,458.9 511.6,465.9 519.5,463.9 527.5,455.9 539.4,453.9 547.4,461.9 539.4,471.9 531.5,478.8 528.5,491.8 524.5,505.7 520.5,515.7 518.5,527.6 524.5,535.6 528.5,547.6 539.4,559.5 551.4,567.5 563.3,577.5 573.3,583.4 591.2,579.4 615.9,567.5 615.9,615.9 384.1,615.9" fill="#7cf0fa" />
</g>
<g filter="url(#b15)">
<polygon points="384.1,452.0 408.0,446.0 417.9,448.0 421.9,459.9 429.9,475.9 435.9,489.8 445.8,497.8 459.8,497.8 471.7,496.8 479.7,503.7 483.7,519.7 493.6,521.7 507.6,519.7 515.5,525.7 519.5,539.6 527.5,553.5 539.4,563.5 551.4,571.5 563.3,581.4 573.3,587.4 591.2,583.4 615.9,573.5 615.9,615.9 384.1,615.9" fill="#86f01c" />
<polygon points="493.6,505.7 499.6,491.8 507.6,482.8 519.5,474.9 526.5,476.9 527.5,485.8 523.5,499.8 517.5,511.7 511.6,517.7 503.6,515.7" fill="#86f01c" />
</g>
<g filter="url(#b15)">
<polygon points="453.8,524.7 466.7,523.7 468.7,533.6 461.8,539.6 454.8,535.6" fill="#7cf0fa" />
</g>
<g filter="url(#b15)">
<polygon points="384.1,459.9 410.0,452.0 415.9,457.9 419.9,471.9 425.9,485.8 433.9,495.8 443.8,499.8 449.8,505.7 448.8,519.7 451.8,535.6 437.8,551.6 441.8,559.5 465.7,557.5 479.7,543.6 483.7,523.7 493.6,522.7 507.6,523.7 512.5,533.6 514.5,547.6 516.5,559.5 523.5,559.5 535.5,567.5 547.4,575.5 559.4,585.4 573.3,591.4 591.2,587.4 615.9,579.4 615.9,615.9 384.1,615.9" fill="#fbf822" />
<polygon points="508.6,499.8 513.5,485.8 521.5,478.8 524.5,482.8 519.5,497.8 513.5,507.7 509.6,507.7" fill="#fbf822" />
</g>
<g filter="url(#b15)">
<polygon points="499.6,615.9 495.6,583.4 501.6,571.5 511.6,567.5 517.5,575.5 519.5,615.9" fill="#86f01c" />
</g>
<g filter="url(#b2)">
<polygon points="440.8,499.8 444.8,501.8 447.8,513.7 444.8,512.7" fill="#ee7a1c" />
<polygon points="479.7,563.5 484.7,564.5 486.7,572.5 482.7,569.5" fill="#ee7a1c" />
<polygon points="510.0,502.7 513.1,502.2 512.7,507.7 510.0,507.3" fill="#ee7a1c" />
<polygon points="516.5,615.9 519.5,596.6 539.4,594.6 552.4,597.4 554.4,615.9" fill="#ee7a1c" />
</g>
<g filter="url(#b2)">
<polygon points="384.1,505.7 408.0,519.7 419.9,527.6 429.9,533.6 431.9,543.6 425.9,551.6 421.9,563.5 429.9,571.5 445.8,575.5 465.7,579.4 479.7,587.4 485.7,615.9 384.1,615.9" fill="#d0291b" />
<polygon points="579.3,615.9 587.3,593.4 615.9,591.4 615.9,615.9" fill="#d0291b" />
</g>
</g>
<g filter="url(#b3)">
<polygon points="129.9,603.6 139.9,607.6 142.9,629.5 135.9,645.4 131.5,648.4 137.9,627.5 135.5,611.6" fill="#2a0402" opacity="0.6"/>
<polygon points="587.7,309.8 595.7,315.7 613.6,349.6 629.5,377.5 621.6,377.5 603.6,349.6 589.7,325.7" fill="#6a0c98" opacity="0.45"/>
<polygon points="560.8,265.9 569.8,279.9 573.7,309.8 565.8,309.8 562.2,289.8" fill="#7a18c0" opacity="0.35"/>
<polygon points="627.5,445.9 634.5,449.8 641.5,493.7 637.5,513.6 632.5,493.7" fill="#8a14b8" opacity="0.4"/>
<polygon points="605.6,497.6 611.6,499.6 615.6,537.5 609.6,537.5" fill="#5a0c90" opacity="0.4"/>
<polygon points="669.4,394.1 695.3,459.8 696.3,585.3 681.3,585.3 679.3,469.8" fill="#a81cd0" opacity="0.35"/>
<polygon points="209.6,685.5 249.4,681.6 325.9,687.5 325.9,699.5 229.5,696.5 207.6,700.5" fill="#5a0c06" opacity="0.55"/>
<polygon points="129.9,605.9 139.9,607.8 141.9,629.8 133.9,643.7 132.3,629.8" fill="#5a0c06" opacity="0.5"/>
<polygon points="155.8,650.7 173.7,659.6 189.7,673.6 199.6,687.5 207.6,699.5 213.6,697.5 203.6,681.6 189.7,665.6 173.7,653.7" fill="#7a140a" opacity="0.45"/>
<polygon points="292.1,675.4 343.6,670.9 377.3,677.6 399.7,691.1 386.2,709.0 377.3,704.5 354.8,700.0 332.4,702.3 292.1,696.7" fill="#4a0804" opacity="0.55"/>
<polygon points="404.2,695.6 435.6,695.6 467.0,704.5 489.4,718.0 489.4,724.7 473.7,715.7 435.6,711.3 415.4,707.9" fill="#5a0c06" opacity="0.45"/>
<polygon points="505.5,673.6 541.0,668.9 569.4,671.2 564.7,687.8 541.0,683.1 512.6,692.5" fill="#7a140a" opacity="0.4"/>
<polygon points="522.1,702.0 531.5,702.0 536.3,742.2 526.8,730.4" fill="#6a1008" opacity="0.4"/>
<polygon points="329.6,167.7 341.6,177.6 357.5,175.7 353.5,183.6 341.6,185.6 333.6,179.6" fill="#8a10b0" opacity="0.4"/>
<polygon points="517.5,205.5 526.4,229.4 530.4,265.9 549.3,265.9 539.4,221.5 528.4,209.5" fill="#8a22d0" opacity="0.85"/>
</g>
</g>
<polygon points="452.8,171.2 451.4,173.2 449.1,174.0 446.7,173.3 445.2,171.3 445.2,168.8 446.6,166.8 448.9,166.0 451.3,166.7 452.8,168.7" fill="#cc2a1a" stroke="#7a1208" stroke-width="0.8"/>
<polygon points="276.1,328.8 273.6,332.3 269.5,333.7 265.4,332.4 262.8,329.0 262.7,324.6 265.2,321.1 269.3,319.7 273.4,321.0 276.0,324.4" fill="#cc2a1a" stroke="#7a1208" stroke-width="0.8"/>
<polygon points="257.2,373.0 255.4,375.5 252.5,376.5 249.5,375.6 247.7,373.1 247.6,370.0 249.4,367.5 252.3,366.5 255.3,367.4 257.1,369.9" fill="#cc2a1a" stroke="#7a1208" stroke-width="0.8"/>
<polygon points="322.6,331.2 319.8,335.2 315.1,336.8 310.4,335.3 307.4,331.4 307.4,326.4 310.2,322.4 314.9,320.8 319.6,322.3 322.6,326.2" fill="#cc2a1a" stroke="#7a1208" stroke-width="0.8"/>
<polygon points="323.6,375.9 320.8,379.9 316.1,381.5 311.4,380.0 308.4,376.1 308.4,371.1 311.2,367.1 315.9,365.5 320.6,367.0 323.6,370.9" fill="#cc2a1a" stroke="#7a1208" stroke-width="0.8"/>
<polygon points="320.1,381.4 317.3,385.4 312.6,387.0 307.9,385.5 304.9,381.6 304.9,376.6 307.7,372.6 312.4,371.0 317.1,372.5 320.1,376.4" fill="#cc2a1a" stroke="#7a1208" stroke-width="0.8"/>
<polygon points="327.6,386.4 324.8,390.4 320.1,392.0 315.4,390.5 312.4,386.6 312.4,381.6 315.2,377.6 319.9,376.0 324.6,377.5 327.6,381.4" fill="#cc2a1a" stroke="#7a1208" stroke-width="0.8"/>
<polygon points="318.6,397.4 315.8,401.4 311.1,403.0 306.4,401.5 303.4,397.6 303.4,392.6 306.2,388.6 310.9,387.0 315.6,388.5 318.6,392.4" fill="#cc2a1a" stroke="#7a1208" stroke-width="0.8"/>
<polygon points="340.1,397.4 337.3,401.4 332.6,403.0 327.9,401.5 324.9,397.6 324.9,392.6 327.7,388.6 332.4,387.0 337.1,388.5 340.1,392.4" fill="#cc2a1a" stroke="#7a1208" stroke-width="0.8"/>
<polygon points="328.6,407.4 325.8,411.4 321.1,413.0 316.4,411.5 313.4,407.6 313.4,402.6 316.2,398.6 320.9,397.0 325.6,398.5 328.6,402.4" fill="#cc2a1a" stroke="#7a1208" stroke-width="0.8"/>
<polygon points="327.6,417.4 324.8,421.4 320.1,423.0 315.4,421.5 312.4,417.6 312.4,412.6 315.2,408.6 319.9,407.0 324.6,408.5 327.6,412.4" fill="#cc2a1a" stroke="#7a1208" stroke-width="0.8"/>
<polygon points="316.6,424.4 313.8,428.4 309.1,430.0 304.4,428.5 301.4,424.6 301.4,419.6 304.2,415.6 308.9,414.0 313.6,415.5 316.6,419.4" fill="#cc2a1a" stroke="#7a1208" stroke-width="0.8"/>
<polygon points="323.6,420.4 320.8,424.4 316.1,426.0 311.4,424.5 308.4,420.6 308.4,415.6 311.2,411.6 315.9,410.0 320.6,411.5 323.6,415.4" fill="#cc2a1a" stroke="#7a1208" stroke-width="0.8"/>
<polygon points="329.6,416.4 326.8,420.4 322.1,422.0 317.4,420.5 314.4,416.6 314.4,411.6 317.2,407.6 321.9,406.0 326.6,407.5 329.6,411.4" fill="#cc2a1a" stroke="#7a1208" stroke-width="0.8"/>
<polygon points="320.1,435.4 317.3,439.4 312.6,441.0 307.9,439.5 304.9,435.6 304.9,430.6 307.7,426.6 312.4,425.0 317.1,426.5 320.1,430.4" fill="#cc2a1a" stroke="#7a1208" stroke-width="0.8"/>
<polygon points="337.6,444.4 334.8,448.4 330.1,450.0 325.4,448.5 322.4,444.6 322.4,439.6 325.2,435.6 329.9,434.0 334.6,435.5 337.6,439.4" fill="#cc2a1a" stroke="#7a1208" stroke-width="0.8"/>
<polygon points="341.6,455.2 338.8,459.2 334.1,460.8 329.4,459.3 326.4,455.4 326.4,450.4 329.2,446.4 333.9,444.8 338.6,446.3 341.6,450.2" fill="#cc2a1a" stroke="#7a1208" stroke-width="0.8"/>
<polygon points="341.6,470.2 338.8,474.2 334.1,475.8 329.4,474.3 326.4,470.4 326.4,465.4 329.2,461.4 333.9,459.8 338.6,461.3 341.6,465.2" fill="#cc2a1a" stroke="#7a1208" stroke-width="0.8"/>
<polygon points="346.1,488.9 343.4,492.7 339.0,494.2 334.6,492.8 331.8,489.1 331.7,484.5 334.4,480.7 338.8,479.2 343.2,480.6 346.0,484.3" fill="#cc2a1a" stroke="#7a1208" stroke-width="0.8"/>
<polygon points="360.0,509.8 357.3,513.6 352.9,515.1 348.5,513.7 345.7,510.0 345.6,505.4 348.3,501.6 352.7,500.1 357.1,501.5 359.9,505.2" fill="#cc2a1a" stroke="#7a1208" stroke-width="0.8"/>
<polygon points="359.6,486.9 358.2,488.9 355.9,489.7 353.5,489.0 352.0,487.0 352.0,484.5 353.4,482.5 355.7,481.7 358.1,482.4 359.6,484.4" fill="#cc2a1a" stroke="#7a1208" stroke-width="0.8"/>
<polygon points="380.9,435.1 378.2,438.9 373.8,440.4 369.4,439.0 366.6,435.3 366.5,430.7 369.2,426.9 373.6,425.4 378.0,426.8 380.8,430.5" fill="#cc2a1a" stroke="#7a1208" stroke-width="0.8"/>
<polygon points="401.9,462.0 399.2,465.8 394.8,467.3 390.4,465.9 387.6,462.2 387.5,457.6 390.2,453.8 394.6,452.3 399.0,453.7 401.8,457.4" fill="#cc2a1a" stroke="#7a1208" stroke-width="0.8"/>
<polygon points="263.8,231.2 262.4,233.2 260.1,234.0 257.7,233.3 256.2,231.3 256.2,228.8 257.6,226.8 259.9,226.0 262.3,226.7 263.8,228.7" fill="#cc2a1a" stroke="#7a1208" stroke-width="0.8"/>
<ellipse cx="406.3" cy="145.6" rx="6.3" ry="4.2" fill="#cc2a1a" stroke="#7a1208" stroke-width="0.8" transform="rotate(15 406.3 145.6)"/>
<ellipse cx="492.5" cy="240.4" rx="5.6" ry="4.6" fill="#cc2a1a" stroke="#7a1208" stroke-width="0.8" transform="rotate(40 492.5 240.4)"/>
<ellipse cx="520.5" cy="241.4" rx="3.2" ry="5.6" fill="#cc2a1a" stroke="#7a1208" stroke-width="0.8" transform="rotate(-15 520.5 241.4)"/>
<polygon points="449.6,164.1 447.4,167.9 443.5,169.7 439.3,168.8 436.3,165.6 435.8,161.3 438.0,157.5 441.9,155.7 446.1,156.6 449.1,159.8" fill="#000000" />
<polygon points="328.4,316.2 326.1,320.2 321.9,322.2 317.3,321.2 314.2,317.8 313.6,313.2 315.9,309.2 320.1,307.2 324.7,308.2 327.8,311.6" fill="#000000" />
<polygon points="373.1,383.2 370.5,387.8 365.8,389.9 360.6,388.9 357.1,385.0 356.5,379.8 359.1,375.2 363.8,373.1 369.0,374.1 372.5,378.0" fill="#000000" />
<polygon points="390.5,448.5 388.1,452.8 383.6,454.8 378.8,453.9 375.4,450.2 374.9,445.3 377.3,441.0 381.8,439.0 386.6,439.9 390.0,443.6" fill="#000000" />
<polygon points="389.1,118.6 386.0,122.9 381.0,124.5 376.0,122.9 372.9,118.7 372.9,113.4 376.0,109.1 381.0,107.5 386.0,109.1 389.1,113.3" fill="#7beef2" stroke="#5cc4cc" stroke-width="0.8"/>
<polygon points="419.1,116.6 416.0,120.9 411.0,122.5 406.0,120.9 402.9,116.7 402.9,111.4 406.0,107.1 411.0,105.5 416.0,107.1 419.1,111.3" fill="#7beef2" stroke="#5cc4cc" stroke-width="0.8"/>
<polygon points="419.1,136.6 416.0,140.9 411.0,142.5 406.0,140.9 402.9,136.7 402.9,131.4 406.0,127.1 411.0,125.5 416.0,127.1 419.1,131.3" fill="#7beef2" stroke="#5cc4cc" stroke-width="0.8"/>
<polygon points="432.1,154.6 429.0,158.9 424.0,160.5 419.0,158.9 415.9,154.7 415.9,149.4 419.0,145.1 424.0,143.5 429.0,145.1 432.1,149.3" fill="#7beef2" stroke="#5cc4cc" stroke-width="0.8"/>
<polygon points="451.1,156.6 448.0,160.9 443.0,162.5 438.0,160.9 434.9,156.7 434.9,151.4 438.0,147.1 443.0,145.5 448.0,147.1 451.1,151.3" fill="#7beef2" stroke="#5cc4cc" stroke-width="0.8"/>
<polygon points="472.1,169.6 469.0,173.9 464.0,175.5 459.0,173.9 455.9,169.7 455.9,164.4 459.0,160.1 464.0,158.5 469.0,160.1 472.1,164.3" fill="#7beef2" stroke="#5cc4cc" stroke-width="0.8"/>
<polygon points="460.1,182.6 457.0,186.9 452.0,188.5 447.0,186.9 443.9,182.7 443.9,177.4 447.0,173.1 452.0,171.5 457.0,173.1 460.1,177.3" fill="#7beef2" stroke="#5cc4cc" stroke-width="0.8"/>
<polygon points="448.1,185.6 445.0,189.9 440.0,191.5 435.0,189.9 431.9,185.7 431.9,180.4 435.0,176.1 440.0,174.5 445.0,176.1 448.1,180.3" fill="#7beef2" stroke="#5cc4cc" stroke-width="0.8"/>
<polygon points="476.1,185.6 473.0,189.9 468.0,191.5 463.0,189.9 459.9,185.7 459.9,180.4 463.0,176.1 468.0,174.5 473.0,176.1 476.1,180.3" fill="#7beef2" stroke="#5cc4cc" stroke-width="0.8"/>
<polygon points="490.6,185.6 487.5,189.9 482.5,191.5 477.5,189.9 474.4,185.7 474.4,180.4 477.5,176.1 482.5,174.5 487.5,176.1 490.6,180.3" fill="#7beef2" stroke="#5cc4cc" stroke-width="0.8"/>
<polygon points="497.6,198.1 494.5,202.4 489.5,204.0 484.5,202.4 481.4,198.2 481.4,192.9 484.5,188.6 489.5,187.0 494.5,188.6 497.6,192.8" fill="#7beef2" stroke="#5cc4cc" stroke-width="0.8"/>
<polygon points="514.6,195.1 511.5,199.4 506.5,201.0 501.5,199.4 498.4,195.2 498.4,189.9 501.5,185.6 506.5,184.0 511.5,185.6 514.6,189.8" fill="#7beef2" stroke="#5cc4cc" stroke-width="0.8"/>
<polygon points="527.6,202.1 524.5,206.4 519.5,208.0 514.5,206.4 511.4,202.2 511.4,196.9 514.5,192.6 519.5,191.0 524.5,192.6 527.6,196.8" fill="#7beef2" stroke="#5cc4cc" stroke-width="0.8"/>
<polygon points="511.6,208.1 508.5,212.4 503.5,214.0 498.5,212.4 495.4,208.2 495.4,202.9 498.5,198.6 503.5,197.0 508.5,198.6 511.6,202.8" fill="#7beef2" stroke="#5cc4cc" stroke-width="0.8"/>
<polygon points="497.6,216.1 494.5,220.4 489.5,222.0 484.5,220.4 481.4,216.2 481.4,210.9 484.5,206.6 489.5,205.0 494.5,206.6 497.6,210.8" fill="#7beef2" stroke="#5cc4cc" stroke-width="0.8"/>
<polygon points="476.6,221.1 473.5,225.4 468.5,227.0 463.5,225.4 460.4,221.2 460.4,215.9 463.5,211.6 468.5,210.0 473.5,211.6 476.6,215.8" fill="#7beef2" stroke="#5cc4cc" stroke-width="0.8"/>
<polygon points="525.6,226.1 522.5,230.4 517.5,232.0 512.5,230.4 509.4,226.2 509.4,220.9 512.5,216.6 517.5,215.0 522.5,216.6 525.6,220.8" fill="#7beef2" stroke="#5cc4cc" stroke-width="0.8"/>
<polygon points="496.6,247.6 493.5,251.9 488.5,253.5 483.5,251.9 480.4,247.7 480.4,242.4 483.5,238.1 488.5,236.5 493.5,238.1 496.6,242.3" fill="#7beef2" stroke="#5cc4cc" stroke-width="0.8"/>
<polygon points="517.6,250.6 514.5,254.9 509.5,256.5 504.5,254.9 501.4,250.7 501.4,245.4 504.5,241.1 509.5,239.5 514.5,241.1 517.6,245.3" fill="#7beef2" stroke="#5cc4cc" stroke-width="0.8"/>
<polygon points="368.6,113.5 365.5,117.8 360.5,119.4 355.5,117.8 352.4,113.6 352.4,108.3 355.5,104.0 360.5,102.4 365.5,104.0 368.6,108.2" fill="#7beef2" stroke="#5cc4cc" stroke-width="0.8"/>
<polygon points="248.1,202.2 245.0,206.5 240.0,208.1 235.0,206.5 231.9,202.3 231.9,197.0 235.0,192.7 240.0,191.1 245.0,192.7 248.1,196.9" fill="#7beef2" stroke="#5cc4cc" stroke-width="0.8"/>
<polygon points="256.0,205.1 252.9,209.4 247.9,211.0 242.9,209.4 239.8,205.2 239.8,199.9 242.9,195.6 247.9,194.0 252.9,195.6 256.0,199.8" fill="#7beef2" stroke="#5cc4cc" stroke-width="0.8"/>
<polygon points="271.0,220.1 267.9,224.4 262.9,226.0 257.9,224.4 254.8,220.2 254.8,214.9 257.9,210.6 262.9,209.0 267.9,210.6 271.0,214.8" fill="#7beef2" stroke="#5cc4cc" stroke-width="0.8"/>
<polygon points="255.0,239.0 251.9,243.3 246.9,244.9 241.9,243.3 238.8,239.1 238.8,233.8 241.9,229.5 246.9,227.9 251.9,229.5 255.0,233.7" fill="#7beef2" stroke="#5cc4cc" stroke-width="0.8"/>
<polygon points="191.4,279.5 188.3,283.8 183.3,285.4 178.3,283.8 175.2,279.6 175.2,274.3 178.3,270.0 183.3,268.4 188.3,270.0 191.4,274.2" fill="#7beef2" stroke="#5cc4cc" stroke-width="0.8"/>
<polygon points="258.5,271.5 255.4,275.8 250.4,277.4 245.4,275.8 242.3,271.6 242.3,266.3 245.4,262.0 250.4,260.4 255.4,262.0 258.5,266.2" fill="#7beef2" stroke="#5cc4cc" stroke-width="0.8"/>
<polygon points="182.8,309.4 179.7,313.7 174.7,315.3 169.7,313.7 166.6,309.5 166.6,304.2 169.7,299.9 174.7,298.3 179.7,299.9 182.8,304.1" fill="#7beef2" stroke="#5cc4cc" stroke-width="0.8"/>
<polygon points="179.9,324.3 176.8,328.6 171.8,330.2 166.8,328.6 163.7,324.4 163.7,319.1 166.8,314.8 171.8,313.2 176.8,314.8 179.9,319.0" fill="#7beef2" stroke="#5cc4cc" stroke-width="0.8"/>
<polygon points="273.1,311.4 270.0,315.7 265.0,317.3 260.0,315.7 256.9,311.5 256.9,306.2 260.0,301.9 265.0,300.3 270.0,301.9 273.1,306.1" fill="#7beef2" stroke="#5cc4cc" stroke-width="0.8"/>
<polygon points="250.6,325.3 247.5,329.6 242.5,331.2 237.5,329.6 234.4,325.4 234.4,320.1 237.5,315.8 242.5,314.2 247.5,315.8 250.6,320.0" fill="#7beef2" stroke="#5cc4cc" stroke-width="0.8"/>
<polygon points="257.5,347.2 254.4,351.5 249.4,353.1 244.4,351.5 241.3,347.3 241.3,342.0 244.4,337.7 249.4,336.1 254.4,337.7 257.5,341.9" fill="#7beef2" stroke="#5cc4cc" stroke-width="0.8"/>
<polygon points="301.4,331.3 298.3,335.6 293.3,337.2 288.3,335.6 285.2,331.4 285.2,326.1 288.3,321.8 293.3,320.2 298.3,321.8 301.4,326.0" fill="#7beef2" stroke="#5cc4cc" stroke-width="0.8"/>
<polygon points="309.3,344.2 306.2,348.5 301.2,350.1 296.2,348.5 293.1,344.3 293.1,339.0 296.2,334.7 301.2,333.1 306.2,334.7 309.3,338.9" fill="#7beef2" stroke="#5cc4cc" stroke-width="0.8"/>
<polygon points="315.3,322.3 312.2,326.6 307.2,328.2 302.2,326.6 299.1,322.4 299.1,317.1 302.2,312.8 307.2,311.2 312.2,312.8 315.3,317.0" fill="#7beef2" stroke="#5cc4cc" stroke-width="0.8"/>
<polygon points="274.5,368.1 271.4,372.4 266.4,374.0 261.4,372.4 258.3,368.2 258.3,362.9 261.4,358.6 266.4,357.0 271.4,358.6 274.5,362.8" fill="#7beef2" stroke="#5cc4cc" stroke-width="0.8"/>
<polygon points="297.4,382.1 294.3,386.4 289.3,388.0 284.3,386.4 281.2,382.2 281.2,376.9 284.3,372.6 289.3,371.0 294.3,372.6 297.4,376.8" fill="#7beef2" stroke="#5cc4cc" stroke-width="0.8"/>
<polygon points="315.3,363.2 312.2,367.5 307.2,369.1 302.2,367.5 299.1,363.3 299.1,358.0 302.2,353.7 307.2,352.1 312.2,353.7 315.3,357.9" fill="#7beef2" stroke="#5cc4cc" stroke-width="0.8"/>
<polygon points="275.5,397.0 272.4,401.3 267.4,402.9 262.4,401.3 259.3,397.1 259.3,391.8 262.4,387.5 267.4,385.9 272.4,387.5 275.5,391.7" fill="#7beef2" stroke="#5cc4cc" stroke-width="0.8"/>
<polygon points="157.9,383.1 154.8,387.4 149.8,389.0 144.8,387.4 141.7,383.2 141.7,377.9 144.8,373.6 149.8,372.0 154.8,373.6 157.9,377.8" fill="#7beef2" stroke="#5cc4cc" stroke-width="0.8"/>
<polygon points="158.9,398.0 155.8,402.3 150.8,403.9 145.8,402.3 142.7,398.1 142.7,392.8 145.8,388.5 150.8,386.9 155.8,388.5 158.9,392.7" fill="#7beef2" stroke="#5cc4cc" stroke-width="0.8"/>
<polygon points="221.4,412.3 218.3,416.6 213.3,418.2 208.3,416.6 205.2,412.4 205.2,407.1 208.3,402.8 213.3,401.2 218.3,402.8 221.4,407.0" fill="#7beef2" stroke="#5cc4cc" stroke-width="0.8"/>
<polygon points="330.1,302.4 327.0,306.7 322.0,308.3 317.0,306.7 313.9,302.5 313.9,297.2 317.0,292.9 322.0,291.3 327.0,292.9 330.1,297.1" fill="#7beef2" stroke="#5cc4cc" stroke-width="0.8"/>
<polygon points="320.1,316.3 317.0,320.6 312.0,322.2 307.0,320.6 303.9,316.4 303.9,311.1 307.0,306.8 312.0,305.2 317.0,306.8 320.1,311.0" fill="#7beef2" stroke="#5cc4cc" stroke-width="0.8"/>
<polygon points="336.1,329.3 333.0,333.6 328.0,335.2 323.0,333.6 319.9,329.4 319.9,324.1 323.0,319.8 328.0,318.2 333.0,319.8 336.1,324.0" fill="#7beef2" stroke="#5cc4cc" stroke-width="0.8"/>
<polygon points="333.1,354.2 330.0,358.5 325.0,360.1 320.0,358.5 316.9,354.3 316.9,349.0 320.0,344.7 325.0,343.1 330.0,344.7 333.1,348.9" fill="#7beef2" stroke="#5cc4cc" stroke-width="0.8"/>
<polygon points="346.0,358.2 342.9,362.5 337.9,364.1 332.9,362.5 329.8,358.3 329.8,353.0 332.9,348.7 337.9,347.1 342.9,348.7 346.0,352.9" fill="#7beef2" stroke="#5cc4cc" stroke-width="0.8"/>
<polygon points="483.4,302.4 480.3,306.7 475.3,308.3 470.3,306.7 467.2,302.5 467.2,297.2 470.3,292.9 475.3,291.3 480.3,292.9 483.4,297.1" fill="#7beef2" stroke="#5cc4cc" stroke-width="0.8"/>
<polygon points="502.4,380.1 499.3,384.4 494.3,386.0 489.3,384.4 486.2,380.2 486.2,374.9 489.3,370.6 494.3,369.0 499.3,370.6 502.4,374.8" fill="#7beef2" stroke="#5cc4cc" stroke-width="0.8"/>
<polygon points="514.3,336.3 511.2,340.6 506.2,342.2 501.2,340.6 498.1,336.4 498.1,331.1 501.2,326.8 506.2,325.2 511.2,326.8 514.3,331.0" fill="#7beef2" stroke="#5cc4cc" stroke-width="0.8"/>
<polygon points="505.4,258.6 502.3,262.9 497.3,264.5 492.3,262.9 489.2,258.7 489.2,253.4 492.3,249.1 497.3,247.5 502.3,249.1 505.4,253.3" fill="#7beef2" stroke="#5cc4cc" stroke-width="0.8"/>
<polygon points="517.3,286.5 514.2,290.8 509.2,292.4 504.2,290.8 501.1,286.6 501.1,281.3 504.2,277.0 509.2,275.4 514.2,277.0 517.3,281.2" fill="#7beef2" stroke="#5cc4cc" stroke-width="0.8"/>
<polygon points="521.1,257.6 518.0,261.9 513.0,263.5 508.0,261.9 504.9,257.7 504.9,252.4 508.0,248.1 513.0,246.5 518.0,248.1 521.1,252.3" fill="#7beef2" stroke="#5cc4cc" stroke-width="0.8"/>
<polygon points="537.0,282.5 533.9,286.8 528.9,288.4 523.9,286.8 520.8,282.6 520.8,277.3 523.9,273.0 528.9,271.4 533.9,273.0 537.0,277.2" fill="#7beef2" stroke="#5cc4cc" stroke-width="0.8"/>
<polygon points="519.1,289.5 516.0,293.8 511.0,295.4 506.0,293.8 502.9,289.6 502.9,284.3 506.0,280.0 511.0,278.4 516.0,280.0 519.1,284.2" fill="#7beef2" stroke="#5cc4cc" stroke-width="0.8"/>
<polygon points="560.9,312.4 557.8,316.7 552.8,318.3 547.8,316.7 544.7,312.5 544.7,307.2 547.8,302.9 552.8,301.3 557.8,302.9 560.9,307.1" fill="#7beef2" stroke="#5cc4cc" stroke-width="0.8"/>
<polygon points="534.0,330.3 530.9,334.6 525.9,336.2 520.9,334.6 517.8,330.4 517.8,325.1 520.9,320.8 525.9,319.2 530.9,320.8 534.0,325.0" fill="#7beef2" stroke="#5cc4cc" stroke-width="0.8"/>
<polygon points="547.0,337.3 543.9,341.6 538.9,343.2 533.9,341.6 530.8,337.4 530.8,332.1 533.9,327.8 538.9,326.2 543.9,327.8 547.0,332.0" fill="#7beef2" stroke="#5cc4cc" stroke-width="0.8"/>
<polygon points="550.0,372.1 546.9,376.4 541.9,378.0 536.9,376.4 533.8,372.2 533.8,366.9 536.9,362.6 541.9,361.0 546.9,362.6 550.0,366.8" fill="#7beef2" stroke="#5cc4cc" stroke-width="0.8"/>
<polygon points="552.0,389.1 548.9,393.4 543.9,395.0 538.9,393.4 535.8,389.2 535.8,383.9 538.9,379.6 543.9,378.0 548.9,379.6 552.0,383.8" fill="#7beef2" stroke="#5cc4cc" stroke-width="0.8"/>
<polygon points="229.7,438.5 226.6,442.8 221.6,444.4 216.6,442.8 213.5,438.6 213.5,433.3 216.6,429.0 221.6,427.4 226.6,429.0 229.7,433.2" fill="#7beef2" stroke="#5cc4cc" stroke-width="0.8"/>
<polygon points="252.6,439.5 249.5,443.8 244.5,445.4 239.5,443.8 236.4,439.6 236.4,434.3 239.5,430.0 244.5,428.4 249.5,430.0 252.6,434.2" fill="#7beef2" stroke="#5cc4cc" stroke-width="0.8"/>
<polygon points="205.7,446.5 202.6,450.8 197.6,452.4 192.6,450.8 189.5,446.6 189.5,441.3 192.6,437.0 197.6,435.4 202.6,437.0 205.7,441.2" fill="#7beef2" stroke="#5cc4cc" stroke-width="0.8"/>
<polygon points="200.8,461.4 197.7,465.7 192.7,467.3 187.7,465.7 184.6,461.5 184.6,456.2 187.7,451.9 192.7,450.3 197.7,451.9 200.8,456.1" fill="#7beef2" stroke="#5cc4cc" stroke-width="0.8"/>
<polygon points="179.9,472.4 176.8,476.7 171.8,478.3 166.8,476.7 163.7,472.5 163.7,467.2 166.8,462.9 171.8,461.3 176.8,462.9 179.9,467.1" fill="#7beef2" stroke="#5cc4cc" stroke-width="0.8"/>
<polygon points="164.9,479.3 161.8,483.6 156.8,485.2 151.8,483.6 148.7,479.4 148.7,474.1 151.8,469.8 156.8,468.2 161.8,469.8 164.9,474.0" fill="#7beef2" stroke="#5cc4cc" stroke-width="0.8"/>
<polygon points="235.6,480.3 232.5,484.6 227.5,486.2 222.5,484.6 219.4,480.4 219.4,475.1 222.5,470.8 227.5,469.2 232.5,470.8 235.6,475.0" fill="#7beef2" stroke="#5cc4cc" stroke-width="0.8"/>
<polygon points="252.6,487.3 249.5,491.6 244.5,493.2 239.5,491.6 236.4,487.4 236.4,482.1 239.5,477.8 244.5,476.2 249.5,477.8 252.6,482.0" fill="#7beef2" stroke="#5cc4cc" stroke-width="0.8"/>
<polygon points="251.6,500.2 248.5,504.5 243.5,506.1 238.5,504.5 235.4,500.3 235.4,495.0 238.5,490.7 243.5,489.1 248.5,490.7 251.6,494.9" fill="#7beef2" stroke="#5cc4cc" stroke-width="0.8"/>
<polygon points="145.0,513.2 141.9,517.5 136.9,519.1 131.9,517.5 128.8,513.3 128.8,508.0 131.9,503.7 136.9,502.1 141.9,503.7 145.0,507.9" fill="#7beef2" stroke="#5cc4cc" stroke-width="0.8"/>
<polygon points="242.6,521.2 239.5,525.5 234.5,527.1 229.5,525.5 226.4,521.3 226.4,516.0 229.5,511.7 234.5,510.1 239.5,511.7 242.6,515.9" fill="#7beef2" stroke="#5cc4cc" stroke-width="0.8"/>
<polygon points="264.5,527.1 261.4,531.4 256.4,533.0 251.4,531.4 248.3,527.2 248.3,521.9 251.4,517.6 256.4,516.0 261.4,517.6 264.5,521.8" fill="#7beef2" stroke="#5cc4cc" stroke-width="0.8"/>
<polygon points="274.5,533.1 271.4,537.4 266.4,539.0 261.4,537.4 258.3,533.2 258.3,527.9 261.4,523.6 266.4,522.0 271.4,523.6 274.5,527.8" fill="#7beef2" stroke="#5cc4cc" stroke-width="0.8"/>
<polygon points="293.4,508.2 290.3,512.5 285.3,514.1 280.3,512.5 277.2,508.3 277.2,503.0 280.3,498.7 285.3,497.1 290.3,498.7 293.4,502.9" fill="#7beef2" stroke="#5cc4cc" stroke-width="0.8"/>
<polygon points="301.4,531.1 298.3,535.4 293.3,537.0 288.3,535.4 285.2,531.2 285.2,525.9 288.3,521.6 293.3,520.0 298.3,521.6 301.4,525.8" fill="#7beef2" stroke="#5cc4cc" stroke-width="0.8"/>
<polygon points="174.9,533.1 171.8,537.4 166.8,539.0 161.8,537.4 158.7,533.2 158.7,527.9 161.8,523.6 166.8,522.0 171.8,523.6 174.9,527.8" fill="#7beef2" stroke="#5cc4cc" stroke-width="0.8"/>
<polygon points="187.8,552.0 184.7,556.3 179.7,557.9 174.7,556.3 171.6,552.1 171.6,546.8 174.7,542.5 179.7,540.9 184.7,542.5 187.8,546.7" fill="#7beef2" stroke="#5cc4cc" stroke-width="0.8"/>
<polygon points="192.8,566.0 189.7,570.3 184.7,571.9 179.7,570.3 176.6,566.1 176.6,560.8 179.7,556.5 184.7,554.9 189.7,556.5 192.8,560.7" fill="#7beef2" stroke="#5cc4cc" stroke-width="0.8"/>
<polygon points="242.6,553.0 239.5,557.3 234.5,558.9 229.5,557.3 226.4,553.1 226.4,547.8 229.5,543.5 234.5,541.9 239.5,543.5 242.6,547.7" fill="#7beef2" stroke="#5cc4cc" stroke-width="0.8"/>
<polygon points="297.4,556.0 294.3,560.3 289.3,561.9 284.3,560.3 281.2,556.1 281.2,550.8 284.3,546.5 289.3,544.9 294.3,546.5 297.4,550.7" fill="#7beef2" stroke="#5cc4cc" stroke-width="0.8"/>
<polygon points="317.3,450.4 314.2,454.7 309.2,456.3 304.2,454.7 301.1,450.5 301.1,445.2 304.2,440.9 309.2,439.3 314.2,440.9 317.3,445.1" fill="#7beef2" stroke="#5cc4cc" stroke-width="0.8"/>
<polygon points="338.0,503.2 334.9,507.5 329.9,509.1 324.9,507.5 321.8,503.3 321.8,498.0 324.9,493.7 329.9,492.1 334.9,493.7 338.0,497.9" fill="#7beef2" stroke="#5cc4cc" stroke-width="0.8"/>
<polygon points="370.9,499.3 367.8,503.6 362.8,505.2 357.8,503.6 354.7,499.4 354.7,494.1 357.8,489.8 362.8,488.2 367.8,489.8 370.9,494.0" fill="#7beef2" stroke="#5cc4cc" stroke-width="0.8"/>
<polygon points="371.9,518.2 368.8,522.5 363.8,524.1 358.8,522.5 355.7,518.3 355.7,513.0 358.8,508.7 363.8,507.1 368.8,508.7 371.9,512.9" fill="#7beef2" stroke="#5cc4cc" stroke-width="0.8"/>
<polygon points="359.9,474.4 356.8,478.7 351.8,480.3 346.8,478.7 343.7,474.5 343.7,469.2 346.8,464.9 351.8,463.3 356.8,464.9 359.9,469.1" fill="#7beef2" stroke="#5cc4cc" stroke-width="0.8"/>
<polygon points="373.9,472.4 370.8,476.7 365.8,478.3 360.8,476.7 357.7,472.5 357.7,467.2 360.8,462.9 365.8,461.3 370.8,462.9 373.9,467.1" fill="#7beef2" stroke="#5cc4cc" stroke-width="0.8"/>
<polygon points="385.8,464.4 382.7,468.7 377.7,470.3 372.7,468.7 369.6,464.5 369.6,459.2 372.7,454.9 377.7,453.3 382.7,454.9 385.8,459.1" fill="#7beef2" stroke="#5cc4cc" stroke-width="0.8"/>
<polygon points="409.7,466.4 406.6,470.7 401.6,472.3 396.6,470.7 393.5,466.5 393.5,461.2 396.6,456.9 401.6,455.3 406.6,456.9 409.7,461.1" fill="#7beef2" stroke="#5cc4cc" stroke-width="0.8"/>
<polygon points="466.5,515.2 463.4,519.5 458.4,521.1 453.4,519.5 450.3,515.3 450.3,510.0 453.4,505.7 458.4,504.1 463.4,505.7 466.5,509.9" fill="#7beef2" stroke="#5cc4cc" stroke-width="0.8"/>
<polygon points="135.0,576.6 131.9,580.9 126.9,582.5 121.9,580.9 118.8,576.7 118.8,571.4 121.9,567.1 126.9,565.5 131.9,567.1 135.0,571.3" fill="#7beef2" stroke="#5cc4cc" stroke-width="0.8"/>
<polygon points="170.9,580.6 167.8,584.9 162.8,586.5 157.8,584.9 154.7,580.7 154.7,575.4 157.8,571.1 162.8,569.5 167.8,571.1 170.9,575.3" fill="#7beef2" stroke="#5cc4cc" stroke-width="0.8"/>
<polygon points="141.0,590.5 137.9,594.8 132.9,596.4 127.9,594.8 124.8,590.6 124.8,585.3 127.9,581.0 132.9,579.4 137.9,581.0 141.0,585.2" fill="#7beef2" stroke="#5cc4cc" stroke-width="0.8"/>
<polygon points="136.0,602.5 132.9,606.8 127.9,608.4 122.9,606.8 119.8,602.6 119.8,597.3 122.9,593.0 127.9,591.4 132.9,593.0 136.0,597.2" fill="#7beef2" stroke="#5cc4cc" stroke-width="0.8"/>
<polygon points="213.7,586.5 210.6,590.8 205.6,592.4 200.6,590.8 197.5,586.6 197.5,581.3 200.6,577.0 205.6,575.4 210.6,577.0 213.7,581.2" fill="#7beef2" stroke="#5cc4cc" stroke-width="0.8"/>
<polygon points="221.7,609.5 218.6,613.8 213.6,615.4 208.6,613.8 205.5,609.6 205.5,604.3 208.6,600.0 213.6,598.4 218.6,600.0 221.7,604.2" fill="#7beef2" stroke="#5cc4cc" stroke-width="0.8"/>
<polygon points="308.1,322.6 305.0,326.9 300.0,328.5 295.0,326.9 291.9,322.7 291.9,317.4 295.0,313.1 300.0,311.5 305.0,313.1 308.1,317.3" fill="#7beef2" stroke="#5cc4cc" stroke-width="0.8"/>
<polygon points="310.6,345.1 307.5,349.4 302.5,351.0 297.5,349.4 294.4,345.2 294.4,339.9 297.5,335.6 302.5,334.0 307.5,335.6 310.6,339.8" fill="#7beef2" stroke="#5cc4cc" stroke-width="0.8"/>
<g fill="#fff"><circle cx="320.6" cy="106.9" r="1.6"/><circle cx="331.6" cy="105.9" r="1.6"/><circle cx="308.7" cy="125.9" r="1.6"/><circle cx="338.6" cy="115.9" r="1.6"/><circle cx="343.5" cy="112.9" r="1.6"/><circle cx="307.7" cy="141.8" r="1.6"/><circle cx="339.6" cy="136.8" r="1.6"/><circle cx="355.5" cy="137.8" r="1.6"/><circle cx="371.4" cy="139.8" r="1.6"/><circle cx="336.6" cy="144.8" r="1.6"/><circle cx="315.7" cy="157.7" r="1.6"/><circle cx="337.6" cy="162.7" r="1.6"/><circle cx="302.7" cy="169.7" r="1.6"/><circle cx="286.8" cy="173.7" r="1.6"/><circle cx="330.6" cy="178.6" r="1.6"/><circle cx="340.6" cy="180.6" r="1.6"/><circle cx="275.8" cy="182.6" r="1.6"/><circle cx="282.8" cy="180.6" r="1.6"/><circle cx="277.8" cy="187.6" r="1.6"/><circle cx="310.7" cy="188.6" r="1.6"/><circle cx="303.7" cy="195.6" r="1.6"/><circle cx="321.6" cy="198.6" r="1.6"/><circle cx="359.5" cy="186.6" r="1.6"/><circle cx="373.4" cy="187.0" r="1.6"/><circle cx="365.5" cy="203.5" r="1.6"/><circle cx="370.4" cy="205.5" r="1.6"/><circle cx="286.8" cy="192.6" r="1.6"/><circle cx="285.8" cy="198.6" r="1.6"/><circle cx="284.8" cy="205.5" r="1.6"/><circle cx="313.7" cy="220.5" r="1.6"/><circle cx="327.6" cy="225.5" r="1.6"/><circle cx="324.6" cy="231.4" r="1.6"/><circle cx="353.5" cy="229.4" r="1.6"/><circle cx="363.5" cy="232.4" r="1.6"/><circle cx="355.5" cy="236.4" r="1.6"/><circle cx="419.2" cy="209.5" r="1.6"/><circle cx="426.2" cy="223.5" r="1.6"/><circle cx="422.2" cy="238.4" r="1.6"/><circle cx="401.3" cy="161.7" r="1.6"/><circle cx="400.3" cy="166.7" r="1.6"/><circle cx="404.3" cy="194.6" r="1.6"/><circle cx="412.3" cy="193.6" r="1.6"/><circle cx="367.5" cy="101.0" r="1.6"/><circle cx="372.4" cy="103.9" r="1.6"/><circle cx="401.3" cy="115.9" r="1.6"/><circle cx="405.3" cy="122.9" r="1.6"/><circle cx="395.3" cy="134.8" r="1.6"/><circle cx="418.2" cy="127.8" r="1.6"/><circle cx="268.8" cy="238.4" r="1.6"/><circle cx="275.8" cy="242.4" r="1.6"/><circle cx="259.9" cy="240.4" r="1.6"/><circle cx="300.7" cy="234.4" r="1.6"/><circle cx="274.8" cy="217.5" r="1.6"/><circle cx="251.9" cy="249.4" r="1.6"/><circle cx="182.7" cy="251.0" r="1.6"/><circle cx="244.5" cy="256.0" r="1.6"/><circle cx="273.3" cy="256.0" r="1.6"/><circle cx="281.3" cy="252.0" r="1.6"/><circle cx="222.5" cy="267.9" r="1.6"/><circle cx="210.6" cy="272.9" r="1.6"/><circle cx="231.5" cy="272.9" r="1.6"/><circle cx="237.5" cy="276.9" r="1.6"/><circle cx="289.3" cy="270.9" r="1.6"/><circle cx="301.2" cy="273.9" r="1.6"/><circle cx="296.3" cy="279.9" r="1.6"/><circle cx="251.4" cy="280.9" r="1.6"/><circle cx="268.4" cy="285.9" r="1.6"/><circle cx="291.3" cy="286.9" r="1.6"/><circle cx="300.2" cy="285.9" r="1.6"/><circle cx="209.6" cy="286.9" r="1.6"/><circle cx="247.5" cy="289.8" r="1.6"/><circle cx="284.3" cy="293.8" r="1.6"/><circle cx="162.8" cy="359.2" r="1.6"/><circle cx="280.3" cy="338.6" r="1.6"/><circle cx="289.3" cy="340.6" r="1.6"/><circle cx="279.3" cy="346.6" r="1.6"/><circle cx="285.3" cy="354.6" r="1.6"/><circle cx="273.3" cy="357.6" r="1.6"/><circle cx="249.4" cy="359.6" r="1.6"/><circle cx="280.3" cy="365.5" r="1.6"/><circle cx="295.3" cy="369.5" r="1.6"/><circle cx="276.3" cy="371.5" r="1.6"/><circle cx="255.4" cy="396.4" r="1.6"/><circle cx="284.3" cy="393.4" r="1.6"/><circle cx="260.4" cy="349.6" r="1.6"/><circle cx="244.5" cy="338.6" r="1.6"/><circle cx="394.7" cy="256.0" r="1.6"/><circle cx="386.7" cy="262.9" r="1.6"/><circle cx="367.8" cy="269.9" r="1.6"/><circle cx="342.9" cy="272.9" r="1.6"/><circle cx="430.5" cy="263.9" r="1.6"/><circle cx="448.4" cy="259.0" r="1.6"/><circle cx="412.6" cy="276.9" r="1.6"/><circle cx="458.4" cy="274.9" r="1.6"/><circle cx="467.4" cy="286.9" r="1.6"/><circle cx="377.7" cy="295.8" r="1.6"/><circle cx="422.5" cy="297.8" r="1.6"/><circle cx="346.9" cy="288.8" r="1.6"/><circle cx="322.9" cy="288.8" r="1.6"/><circle cx="312.0" cy="297.8" r="1.6"/><circle cx="430.5" cy="318.7" r="1.6"/><circle cx="362.8" cy="323.3" r="1.6"/><circle cx="355.8" cy="330.7" r="1.6"/><circle cx="339.9" cy="336.7" r="1.6"/><circle cx="324.9" cy="340.6" r="1.6"/><circle cx="358.8" cy="339.6" r="1.6"/><circle cx="367.8" cy="347.6" r="1.6"/><circle cx="354.8" cy="352.6" r="1.6"/><circle cx="343.9" cy="373.5" r="1.6"/><circle cx="368.8" cy="402.4" r="1.6"/><circle cx="349.8" cy="406.4" r="1.6"/><circle cx="500.2" cy="275.9" r="1.6"/><circle cx="489.3" cy="326.7" r="1.6"/><circle cx="500.2" cy="387.5" r="1.6"/><circle cx="463.4" cy="252.0" r="1.6"/><circle cx="329.9" cy="312.7" r="1.6"/><circle cx="335.9" cy="329.7" r="1.6"/><circle cx="566.8" cy="262.9" r="1.6"/><circle cx="574.7" cy="270.9" r="1.6"/><circle cx="574.7" cy="278.9" r="1.6"/><circle cx="574.1" cy="289.8" r="1.6"/><circle cx="604.6" cy="302.2" r="1.6"/><circle cx="605.6" cy="313.3" r="1.6"/><circle cx="635.5" cy="346.6" r="1.6"/><circle cx="658.4" cy="403.4" r="1.6"/><circle cx="637.5" cy="409.4" r="1.6"/><circle cx="522.9" cy="262.0" r="1.6"/><circle cx="525.9" cy="259.0" r="1.6"/><circle cx="519.0" cy="287.8" r="1.6"/><circle cx="517.0" cy="302.8" r="1.6"/><circle cx="530.9" cy="306.8" r="1.6"/><circle cx="542.9" cy="303.8" r="1.6"/><circle cx="541.9" cy="296.8" r="1.6"/><circle cx="544.9" cy="325.7" r="1.6"/><circle cx="552.8" cy="331.3" r="1.6"/><circle cx="516.0" cy="326.7" r="1.6"/><circle cx="520.0" cy="337.6" r="1.6"/><circle cx="552.8" cy="348.6" r="1.6"/><circle cx="550.8" cy="357.6" r="1.6"/><circle cx="539.9" cy="357.6" r="1.6"/><circle cx="522.0" cy="371.5" r="1.6"/><circle cx="548.8" cy="377.5" r="1.6"/><circle cx="557.8" cy="380.5" r="1.6"/><circle cx="560.8" cy="402.4" r="1.6"/><circle cx="145.9" cy="414.0" r="1.6"/><circle cx="165.8" cy="428.9" r="1.6"/><circle cx="164.8" cy="438.9" r="1.6"/><circle cx="173.7" cy="439.9" r="1.6"/><circle cx="193.7" cy="435.9" r="1.6"/><circle cx="203.6" cy="434.9" r="1.6"/><circle cx="208.6" cy="430.9" r="1.6"/><circle cx="214.6" cy="425.9" r="1.6"/><circle cx="224.5" cy="424.9" r="1.6"/><circle cx="232.5" cy="435.9" r="1.6"/><circle cx="207.6" cy="448.8" r="1.6"/><circle cx="206.6" cy="454.8" r="1.6"/><circle cx="213.6" cy="455.8" r="1.6"/><circle cx="184.7" cy="473.7" r="1.6"/><circle cx="190.7" cy="485.7" r="1.6"/><circle cx="159.8" cy="489.7" r="1.6"/><circle cx="211.6" cy="477.7" r="1.6"/><circle cx="221.6" cy="478.7" r="1.6"/><circle cx="226.5" cy="468.8" r="1.6"/><circle cx="237.5" cy="468.8" r="1.6"/><circle cx="229.5" cy="493.7" r="1.6"/><circle cx="257.4" cy="444.9" r="1.6"/><circle cx="267.4" cy="441.9" r="1.6"/><circle cx="283.3" cy="426.9" r="1.6"/><circle cx="260.4" cy="421.0" r="1.6"/><circle cx="269.4" cy="469.8" r="1.6"/><circle cx="276.3" cy="486.7" r="1.6"/><circle cx="127.9" cy="513.6" r="1.6"/><circle cx="123.9" cy="520.6" r="1.6"/><circle cx="127.9" cy="541.5" r="1.6"/><circle cx="118.0" cy="546.5" r="1.6"/><circle cx="246.5" cy="545.5" r="1.6"/><circle cx="245.5" cy="552.4" r="1.6"/><circle cx="250.4" cy="565.4" r="1.6"/><circle cx="132.9" cy="519.6" r="1.6"/><circle cx="344.9" cy="413.0" r="1.6"/><circle cx="357.8" cy="420.0" r="1.6"/><circle cx="356.8" cy="423.9" r="1.6"/><circle cx="347.8" cy="422.9" r="1.6"/><circle cx="400.6" cy="417.0" r="1.6"/><circle cx="419.6" cy="413.0" r="1.6"/><circle cx="425.5" cy="426.9" r="1.6"/><circle cx="432.5" cy="435.9" r="1.6"/><circle cx="447.5" cy="433.9" r="1.6"/><circle cx="459.4" cy="431.9" r="1.6"/><circle cx="421.6" cy="442.9" r="1.6"/><circle cx="466.4" cy="442.9" r="1.6"/><circle cx="483.3" cy="450.8" r="1.6"/><circle cx="473.3" cy="459.8" r="1.6"/><circle cx="445.5" cy="467.8" r="1.6"/><circle cx="496.3" cy="428.9" r="1.6"/><circle cx="506.2" cy="437.9" r="1.6"/><circle cx="485.3" cy="421.0" r="1.6"/><circle cx="358.8" cy="445.9" r="1.6"/><circle cx="385.7" cy="437.9" r="1.6"/><circle cx="383.7" cy="477.7" r="1.6"/><circle cx="394.7" cy="480.7" r="1.6"/><circle cx="412.6" cy="472.7" r="1.6"/><circle cx="431.5" cy="473.7" r="1.6"/><circle cx="470.4" cy="477.7" r="1.6"/><circle cx="453.4" cy="483.7" r="1.6"/><circle cx="447.5" cy="489.7" r="1.6"/><circle cx="440.5" cy="487.7" r="1.6"/><circle cx="377.7" cy="491.7" r="1.6"/><circle cx="318.0" cy="498.6" r="1.6"/><circle cx="318.0" cy="504.6" r="1.6"/><circle cx="382.7" cy="514.6" r="1.6"/><circle cx="372.7" cy="523.5" r="1.6"/><circle cx="374.7" cy="529.5" r="1.6"/><circle cx="400.6" cy="521.6" r="1.6"/><circle cx="363.8" cy="534.5" r="1.6"/><circle cx="375.7" cy="550.4" r="1.6"/><circle cx="413.6" cy="550.4" r="1.6"/><circle cx="341.9" cy="561.4" r="1.6"/><circle cx="410.6" cy="563.4" r="1.6"/><circle cx="441.5" cy="559.4" r="1.6"/><circle cx="418.6" cy="542.5" r="1.6"/><circle cx="445.5" cy="511.6" r="1.6"/><circle cx="468.4" cy="497.6" r="1.6"/><circle cx="479.3" cy="508.6" r="1.6"/><circle cx="458.4" cy="529.5" r="1.6"/><circle cx="485.3" cy="523.5" r="1.6"/><circle cx="492.3" cy="528.5" r="1.6"/><circle cx="484.3" cy="546.5" r="1.6"/><circle cx="500.2" cy="557.4" r="1.6"/><circle cx="507.2" cy="517.6" r="1.6"/><circle cx="526.9" cy="435.9" r="1.6"/><circle cx="563.8" cy="417.0" r="1.6"/><circle cx="561.8" cy="429.9" r="1.6"/><circle cx="638.5" cy="412.0" r="1.6"/><circle cx="661.4" cy="414.0" r="1.6"/><circle cx="657.4" cy="422.9" r="1.6"/><circle cx="660.4" cy="423.9" r="1.6"/><circle cx="679.3" cy="436.9" r="1.6"/><circle cx="690.3" cy="445.9" r="1.6"/><circle cx="693.3" cy="454.8" r="1.6"/><circle cx="627.5" cy="441.9" r="1.6"/><circle cx="633.5" cy="445.9" r="1.6"/><circle cx="576.7" cy="446.9" r="1.6"/><circle cx="576.7" cy="451.8" r="1.6"/><circle cx="576.7" cy="467.8" r="1.6"/><circle cx="576.7" cy="476.7" r="1.6"/><circle cx="630.5" cy="465.8" r="1.6"/><circle cx="655.4" cy="467.8" r="1.6"/><circle cx="632.5" cy="473.7" r="1.6"/><circle cx="633.5" cy="483.7" r="1.6"/><circle cx="695.3" cy="494.7" r="1.6"/><circle cx="608.6" cy="503.6" r="1.6"/><circle cx="610.6" cy="512.6" r="1.6"/><circle cx="611.6" cy="521.6" r="1.6"/><circle cx="643.5" cy="516.6" r="1.6"/><circle cx="612.6" cy="538.5" r="1.6"/><circle cx="645.5" cy="541.5" r="1.6"/><circle cx="696.3" cy="520.6" r="1.6"/><circle cx="697.3" cy="530.5" r="1.6"/><circle cx="697.3" cy="537.5" r="1.6"/><circle cx="697.3" cy="550.4" r="1.6"/><circle cx="696.3" cy="559.4" r="1.6"/><circle cx="684.3" cy="563.4" r="1.6"/><circle cx="634.5" cy="562.4" r="1.6"/><circle cx="526.9" cy="467.8" r="1.6"/><circle cx="522.0" cy="478.7" r="1.6"/><circle cx="512.0" cy="508.6" r="1.6"/><circle cx="120.0" cy="613.8" r="1.6"/><circle cx="125.9" cy="619.8" r="1.6"/><circle cx="131.9" cy="645.7" r="1.6"/><circle cx="155.4" cy="651.7" r="1.6"/><circle cx="203.6" cy="665.6" r="1.6"/><circle cx="184.7" cy="625.8" r="1.6"/><circle cx="241.5" cy="582.9" r="1.6"/><circle cx="243.5" cy="605.9" r="1.6"/><circle cx="238.5" cy="618.8" r="1.6"/><circle cx="253.4" cy="626.8" r="1.6"/><circle cx="299.2" cy="628.8" r="1.6"/><circle cx="293.3" cy="621.8" r="1.6"/><circle cx="230.5" cy="683.5" r="1.6"/><circle cx="236.5" cy="683.5" r="1.6"/><circle cx="227.5" cy="691.5" r="1.6"/><circle cx="208.6" cy="700.5" r="1.6"/><circle cx="277.3" cy="677.6" r="1.6"/><circle cx="293.3" cy="697.5" r="1.6"/><circle cx="301.2" cy="573.0" r="1.6"/><circle cx="170.8" cy="585.9" r="1.6"/><circle cx="181.7" cy="593.9" r="1.6"/><circle cx="403.0" cy="575.6" r="1.6"/><circle cx="375.5" cy="586.1" r="1.6"/><circle cx="419.9" cy="604.8" r="1.6"/><circle cx="339.1" cy="620.4" r="1.6"/><circle cx="433.3" cy="616.0" r="1.6"/><circle cx="426.6" cy="627.8" r="1.6"/><circle cx="431.1" cy="642.9" r="1.6"/><circle cx="347.0" cy="651.8" r="1.6"/><circle cx="425.5" cy="666.9" r="1.6"/><circle cx="452.4" cy="662.4" r="1.6"/><circle cx="459.1" cy="667.5" r="1.6"/><circle cx="438.9" cy="677.2" r="1.6"/><circle cx="464.7" cy="679.4" r="1.6"/><circle cx="495.0" cy="677.2" r="1.6"/><circle cx="436.7" cy="688.8" r="1.6"/><circle cx="430.0" cy="693.3" r="1.6"/><circle cx="442.3" cy="693.3" r="1.6"/><circle cx="450.1" cy="702.3" r="1.6"/><circle cx="456.9" cy="705.7" r="1.6"/><circle cx="474.8" cy="712.4" r="1.6"/><circle cx="502.8" cy="696.7" r="1.6"/><circle cx="507.3" cy="718.0" r="1.6"/><circle cx="489.4" cy="728.1" r="1.6"/><circle cx="403.0" cy="697.8" r="1.6"/><circle cx="387.4" cy="700.0" r="1.6"/><circle cx="379.5" cy="704.5" r="1.6"/><circle cx="384.0" cy="705.7" r="1.6"/><circle cx="389.6" cy="712.4" r="1.6"/><circle cx="401.9" cy="716.9" r="1.6"/><circle cx="417.2" cy="707.9" r="1.6"/><circle cx="392.5" cy="728.1" r="1.6"/><circle cx="335.8" cy="691.1" r="1.6"/><circle cx="342.5" cy="693.8" r="1.6"/><circle cx="330.2" cy="700.0" r="1.6"/><circle cx="332.4" cy="703.4" r="1.6"/><circle cx="497.2" cy="582.3" r="1.6"/><circle cx="483.8" cy="595.8" r="1.6"/><circle cx="490.5" cy="623.8" r="1.6"/><circle cx="467.0" cy="635.0" r="1.6"/><circle cx="484.2" cy="563.6" r="1.6"/><circle cx="510.2" cy="567.1" r="1.6"/><circle cx="515.0" cy="573.0" r="1.6"/><circle cx="497.2" cy="582.5" r="1.6"/><circle cx="511.4" cy="590.8" r="1.6"/><circle cx="516.2" cy="599.1" r="1.6"/><circle cx="483.0" cy="595.5" r="1.6"/><circle cx="490.1" cy="623.9" r="1.6"/><circle cx="537.5" cy="622.0" r="1.6"/><circle cx="538.6" cy="631.0" r="1.6"/><circle cx="548.1" cy="628.6" r="1.6"/><circle cx="570.6" cy="628.2" r="1.6"/><circle cx="580.1" cy="627.5" r="1.6"/><circle cx="590.7" cy="621.5" r="1.6"/><circle cx="595.4" cy="626.3" r="1.6"/><circle cx="525.6" cy="644.0" r="1.6"/><circle cx="557.6" cy="648.0" r="1.6"/><circle cx="589.5" cy="651.1" r="1.6"/><circle cx="586.0" cy="640.5" r="1.6"/><circle cx="595.4" cy="661.8" r="1.6"/><circle cx="613.2" cy="611.6" r="1.6"/><circle cx="609.6" cy="571.8" r="1.6"/><circle cx="628.6" cy="582.5" r="1.6"/><circle cx="629.8" cy="589.6" r="1.6"/><circle cx="634.5" cy="563.6" r="1.6"/><circle cx="684.2" cy="563.6" r="1.6"/><circle cx="693.7" cy="577.8" r="1.6"/><circle cx="683.0" cy="607.3" r="1.6"/><circle cx="660.5" cy="616.3" r="1.6"/><circle cx="626.2" cy="626.7" r="1.6"/><circle cx="623.8" cy="635.7" r="1.6"/><circle cx="622.7" cy="644.7" r="1.6"/><circle cx="620.3" cy="653.5" r="1.6"/><circle cx="595.4" cy="677.2" r="1.6"/><circle cx="587.2" cy="681.9" r="1.6"/><circle cx="596.6" cy="691.4" r="1.6"/><circle cx="586.0" cy="689.0" r="1.6"/><circle cx="581.2" cy="697.3" r="1.6"/><circle cx="494.9" cy="676.7" r="1.6"/><circle cx="562.3" cy="683.1" r="1.6"/><circle cx="503.1" cy="696.1" r="1.6"/><circle cx="526.8" cy="708.6" r="1.6"/><circle cx="535.1" cy="707.9" r="1.6"/><circle cx="524.4" cy="703.2" r="1.6"/><circle cx="528.0" cy="713.8" r="1.6"/><circle cx="506.7" cy="718.1" r="1.6"/><circle cx="474.7" cy="712.7" r="1.6"/><circle cx="488.9" cy="727.6" r="1.6"/><circle cx="511.4" cy="728.0" r="1.6"/><circle cx="544.6" cy="730.4" r="1.6"/><circle cx="536.3" cy="742.2" r="1.6"/><circle cx="574.1" cy="719.8" r="1.6"/><circle cx="557.6" cy="720.5" r="1.6"/><circle cx="552.8" cy="720.9" r="1.6"/><circle cx="396.9" cy="115.9" r="1.6"/><circle cx="401.9" cy="120.9" r="1.6"/><circle cx="394.9" cy="134.8" r="1.6"/><circle cx="399.9" cy="140.8" r="1.6"/><circle cx="420.8" cy="140.8" r="1.6"/><circle cx="434.8" cy="144.8" r="1.6"/><circle cx="458.7" cy="156.7" r="1.6"/><circle cx="401.9" cy="160.7" r="1.6"/><circle cx="399.9" cy="166.7" r="1.6"/><circle cx="441.8" cy="167.7" r="1.6"/><circle cx="429.8" cy="184.6" r="1.6"/><circle cx="443.7" cy="190.6" r="1.6"/><circle cx="429.8" cy="199.6" r="1.6"/><circle cx="439.8" cy="205.5" r="1.6"/><circle cx="418.8" cy="209.5" r="1.6"/><circle cx="432.8" cy="215.5" r="1.6"/><circle cx="425.8" cy="223.5" r="1.6"/><circle cx="421.8" cy="238.4" r="1.6"/><circle cx="440.8" cy="239.4" r="1.6"/><circle cx="444.7" cy="248.4" r="1.6"/><circle cx="475.6" cy="202.5" r="1.6"/><circle cx="480.6" cy="210.5" r="1.6"/><circle cx="510.5" cy="203.5" r="1.6"/><circle cx="528.4" cy="206.5" r="1.6"/><circle cx="531.4" cy="212.5" r="1.6"/><circle cx="541.4" cy="217.5" r="1.6"/><circle cx="554.3" cy="235.4" r="1.6"/><circle cx="520.4" cy="234.4" r="1.6"/><circle cx="465.7" cy="228.4" r="1.6"/><circle cx="403.9" cy="194.6" r="1.6"/><circle cx="411.9" cy="193.6" r="1.6"/></g>
<g clip-path="url(#heartclip)"><path d="M646.2,674.4 L651,672 L656.6,670.7 L660,672 L663.3,672.2 L664.8,670 L670.8,669.2 L672.3,676 L673,685 L669.8,692.4 L671.6,698.3 L681.3,698.3 L684.3,699.8 L685.8,704.3 L690.3,711.8 L691,717 L697.7,725.3 L702.2,735.7 L701.5,747.7 L697.7,758.1 L690.3,763.4 L682.8,761.9 L669.3,755.2 L654.4,744.7 L642.4,732.7 L635.7,720.8 L634.9,711.8 L637.9,702.8 L643.2,695.4 L644.7,684.9 Z" fill="#fffff2"/>
<g filter="url(#b15)">
<polygon points="634.0,712.0 635.7,721.0 642.4,733.0 654.4,745.0 669.3,755.5 682.8,762.5 690.3,764.0 697.7,758.5 694.0,756.0 684.0,757.0 671.0,750.0 657.0,740.0 646.0,729.0 640.0,719.0 638.5,708.0" fill="#c6c68a" />
<polygon points="669.0,690.0 671.0,698.0 676.0,700.0 682.0,703.0 680.0,706.0 672.0,702.0 667.0,694.0" fill="#c0c088" />
<polygon points="697.7,725.3 702.2,735.7 701.5,747.7 697.7,758.1 697.0,746.0 696.0,734.0" fill="#dcdca8" />
<polygon points="643.0,696.0 645.0,685.0 646.5,675.0 648.0,676.0 647.5,686.0 646.0,697.0" fill="#d8d8a6" />
<polygon points="684.0,700.0 686.0,704.5 690.5,712.0 691.0,717.0 688.0,714.0 684.5,707.0" fill="#cfcf98" />
</g></g>
<ellipse cx="659.6" cy="679.8" rx="2.9" ry="2.3" fill="#000" transform="rotate(-15 659.6 679.8)"/>
<rect x="769.5" y="0" width="630.5" height="1.3" fill="#f2f2f2"/>
<g fill="#e2ddd0"><rect x="771.02" y="790.6" width="1.3" height="5"/><rect x="777.80" y="790.6" width="1.3" height="5"/><rect x="784.58" y="790.6" width="1.3" height="5"/><rect x="791.35" y="781" width="1.3" height="14.6"/><rect x="798.12" y="790.6" width="1.3" height="5"/><rect x="804.90" y="790.6" width="1.3" height="5"/><rect x="811.67" y="790.6" width="1.3" height="5"/><rect x="818.45" y="790.6" width="1.3" height="5"/><rect x="825.23" y="790.6" width="1.3" height="5"/><rect x="832.00" y="790.6" width="1.3" height="5"/><rect x="838.77" y="790.6" width="1.3" height="5"/><rect x="845.55" y="790.6" width="1.3" height="5"/><rect x="852.32" y="790.6" width="1.3" height="5"/><rect x="859.10" y="781" width="1.3" height="14.6"/><rect x="865.88" y="790.6" width="1.3" height="5"/><rect x="872.65" y="790.6" width="1.3" height="5"/><rect x="879.43" y="790.6" width="1.3" height="5"/><rect x="886.20" y="790.6" width="1.3" height="5"/><rect x="892.98" y="790.6" width="1.3" height="5"/><rect x="899.75" y="790.6" width="1.3" height="5"/><rect x="906.52" y="790.6" width="1.3" height="5"/><rect x="913.30" y="790.6" width="1.3" height="5"/><rect x="920.07" y="790.6" width="1.3" height="5"/><rect x="926.85" y="781" width="1.3" height="14.6"/><rect x="933.62" y="790.6" width="1.3" height="5"/><rect x="940.40" y="790.6" width="1.3" height="5"/><rect x="947.18" y="790.6" width="1.3" height="5"/><rect x="953.95" y="790.6" width="1.3" height="5"/><rect x="960.73" y="790.6" width="1.3" height="5"/><rect x="967.50" y="790.6" width="1.3" height="5"/><rect x="974.27" y="790.6" width="1.3" height="5"/><rect x="981.05" y="790.6" width="1.3" height="5"/><rect x="987.82" y="790.6" width="1.3" height="5"/><rect x="994.60" y="781" width="1.3" height="14.6"/><rect x="1001.38" y="790.6" width="1.3" height="5"/><rect x="1008.15" y="790.6" width="1.3" height="5"/><rect x="1014.93" y="790.6" width="1.3" height="5"/><rect x="1021.70" y="790.6" width="1.3" height="5"/><rect x="1028.47" y="790.6" width="1.3" height="5"/><rect x="1035.25" y="790.6" width="1.3" height="5"/><rect x="1042.02" y="790.6" width="1.3" height="5"/><rect x="1048.80" y="790.6" width="1.3" height="5"/><rect x="1055.57" y="790.6" width="1.3" height="5"/><rect x="1062.35" y="781" width="1.3" height="14.6"/><rect x="1069.12" y="790.6" width="1.3" height="5"/><rect x="1075.90" y="790.6" width="1.3" height="5"/><rect x="1082.67" y="790.6" width="1.3" height="5"/><rect x="1089.45" y="790.6" width="1.3" height="5"/><rect x="1096.22" y="790.6" width="1.3" height="5"/><rect x="1103.00" y="790.6" width="1.3" height="5"/><rect x="1109.77" y="790.6" width="1.3" height="5"/><rect x="1116.55" y="790.6" width="1.3" height="5"/><rect x="1123.32" y="790.6" width="1.3" height="5"/><rect x="1130.10" y="781" width="1.3" height="14.6"/><rect x="1136.88" y="790.6" width="1.3" height="5"/><rect x="1143.65" y="790.6" width="1.3" height="5"/><rect x="1150.42" y="790.6" width="1.3" height="5"/><rect x="1157.20" y="790.6" width="1.3" height="5"/><rect x="1163.97" y="790.6" width="1.3" height="5"/><rect x="1170.75" y="790.6" width="1.3" height="5"/><rect x="1177.52" y="790.6" width="1.3" height="5"/><rect x="1184.30" y="790.6" width="1.3" height="5"/><rect x="1191.07" y="790.6" width="1.3" height="5"/><rect x="1197.85" y="781" width="1.3" height="14.6"/><rect x="1204.62" y="790.6" width="1.3" height="5"/><rect x="1211.40" y="790.6" width="1.3" height="5"/><rect x="1218.17" y="790.6" width="1.3" height="5"/><rect x="1224.95" y="790.6" width="1.3" height="5"/><rect x="1231.72" y="790.6" width="1.3" height="5"/><rect x="1238.50" y="790.6" width="1.3" height="5"/><rect x="1245.27" y="790.6" width="1.3" height="5"/><rect x="1252.05" y="790.6" width="1.3" height="5"/><rect x="1258.82" y="790.6" width="1.3" height="5"/><rect x="1265.60" y="781" width="1.3" height="14.6"/><rect x="1272.38" y="790.6" width="1.3" height="5"/><rect x="1279.15" y="790.6" width="1.3" height="5"/><rect x="1285.92" y="790.6" width="1.3" height="5"/><rect x="1292.70" y="790.6" width="1.3" height="5"/><rect x="1299.47" y="790.6" width="1.3" height="5"/><rect x="1306.25" y="790.6" width="1.3" height="5"/><rect x="1313.02" y="790.6" width="1.3" height="5"/><rect x="1319.80" y="790.6" width="1.3" height="5"/><rect x="1326.57" y="790.6" width="1.3" height="5"/><rect x="1333.35" y="781" width="1.3" height="14.6"/><rect x="1340.12" y="790.6" width="1.3" height="5"/><rect x="1346.90" y="790.6" width="1.3" height="5"/><rect x="1353.67" y="790.6" width="1.3" height="5"/><rect x="1360.45" y="790.6" width="1.3" height="5"/><rect x="1367.22" y="790.6" width="1.3" height="5"/><rect x="1374.00" y="790.6" width="1.3" height="5"/><rect x="1380.77" y="790.6" width="1.3" height="5"/><rect x="1387.55" y="790.6" width="1.3" height="5"/><rect x="1394.32" y="790.6" width="1.3" height="5"/></g>
<rect x="1062.00" y="1" width="1.6" height="795.5" fill="#7ddbe2"/>
<rect x="1333.20" y="1" width="1.6" height="795.5" fill="#7ddbe2"/>
<rect x="1185.20" y="1" width="1.6" height="795.5" fill="#f4f4f4"/>
<rect x="1239.40" y="1" width="1.6" height="795.5" fill="#f4f4f4"/>
<rect x="1186" y="399.1" width="54" height="1.4" fill="#f4f4f4"/>
<line x1="1198.7" y1="3" x2="1198.7" y2="761" stroke="#8f2f1e" stroke-width="1.1" stroke-dasharray="3.2 4.4"/>
<line x1="1231" y1="3" x2="1231" y2="796" stroke="#c9c99a" stroke-width="1.7" stroke-dasharray="3.3 4.4"/>
<polyline points="769.5,136.8 800.0,137.2 830.0,137.4 845.0,137.2 858.0,135.8 872.0,134.6 900.0,134.6 950.0,135.0 1000.0,135.4 1040.0,135.8 1062.0,136.0 1080.0,135.0 1100.0,134.0 1117.0,133.4 1128.0,134.8 1140.0,137.0 1160.0,137.6 1183.0,137.4 1186.5,136.0 1190.0,128.0 1194.0,116.0 1197.0,108.0 1198.6,105.6 1200.5,109.0 1203.0,124.0 1205.5,140.0 1207.5,145.6 1212.0,144.4 1220.0,142.8 1230.0,142.0 1239.0,141.6 1243.0,140.6 1247.0,138.6 1260.0,138.2 1300.0,137.6 1334.0,137.6 1370.0,137.8 1400.0,137.8" fill="none" stroke="#ffffff" stroke-width="2.2" stroke-linejoin="round" stroke-linecap="round" />
<polyline points="769.5,266.0 775.0,265.2 783.0,264.8 792.0,264.6 800.0,264.8 812.0,264.6 820.0,264.4 824.0,266.0 827.0,269.5 830.0,271.5 834.0,270.2 840.0,267.5 848.0,265.2 856.0,263.6 862.0,263.2 870.0,263.8 880.0,265.6 890.0,265.2 900.0,265.6 910.0,264.6 925.0,264.8 940.0,265.4 955.0,265.2 970.0,265.6 985.0,265.8 995.0,265.2 1010.0,264.6 1025.0,265.2 1040.0,264.8 1055.0,264.4 1062.0,264.6 1068.0,266.2 1074.0,267.2 1082.0,265.8 1092.0,265.2 1100.0,265.4 1106.0,264.0 1112.0,261.8 1116.0,260.8 1119.0,262.4 1122.0,265.6 1130.0,266.2 1145.0,265.6 1160.0,265.8 1175.0,265.4 1184.0,263.8 1188.0,264.4 1194.0,266.0 1198.0,267.4 1201.0,268.4 1204.0,266.0 1206.5,259.5 1208.5,256.8 1210.5,261.0 1212.5,272.0 1213.8,276.0 1215.0,280.0 1216.5,296.0 1218.3,307.5 1219.8,300.0 1220.8,296.0 1221.8,298.0 1223.5,284.0 1225.5,262.0 1227.5,232.0 1229.5,204.0 1231.0,190.0 1232.5,194.0 1234.0,209.0 1235.5,210.5 1236.8,213.0 1238.0,236.0 1239.5,266.0 1241.0,290.0 1242.2,301.0 1243.0,286.0 1244.2,268.0 1245.2,266.0 1246.0,275.0 1247.0,279.5 1248.3,270.0 1249.5,277.0 1250.8,270.5 1252.0,277.0 1253.5,269.0 1255.0,275.0 1256.5,282.0 1258.5,283.5 1261.0,281.5 1264.0,276.0 1268.0,269.5 1272.0,264.5 1277.0,261.6 1283.0,261.0 1290.0,262.2 1298.0,264.2 1306.0,266.2 1315.0,265.4 1325.0,264.6 1334.0,263.2 1342.0,264.8 1350.0,265.0 1360.0,263.8 1372.0,262.8 1382.0,264.0 1390.0,264.8 1396.0,266.0 1400.0,268.0" fill="none" stroke="#e02a1c" stroke-width="2.2" stroke-linejoin="round" stroke-linecap="round" />
<circle cx="1198.6" cy="104.2" r="2.3" fill="#e63222"/>
<rect x="1228.4" y="184" width="5.2" height="5.4" fill="#f7ef3a"/>
<rect x="777.4" y="4.8" width="20.4" height="22" rx="2.6" fill="url(#ic)" stroke="#fbfbff" stroke-width="1.5"/>
<rect x="803.0" y="4.8" width="20.4" height="22" rx="2.6" fill="url(#ic)" stroke="#fbfbff" stroke-width="1.5"/>
<g transform="translate(777.4,4.8)"><path d="M5.2,6.2 L10.6,3.2 L12.4,5.2 L10.9,6.3 L17.2,14.2 L14.6,16.3 L8.6,8.2 L6.9,9.2 Z" fill="#fff"/><path d="M4.0,15.6 L8.2,15.6 L6.1,18.2 Z" fill="#fff"/><path d="M3.2,14.2 L9,14.2" stroke="#8896e8" stroke-width="0.8"/></g>
<g transform="translate(803,4.8)"><path d="M1.6,10.4 L3.6,10.4 L4.6,8.2 L5.8,12.2 L7.4,4.6 L8.8,10.4 L10.8,10.4" fill="none" stroke="#20303a" stroke-width="1.1"/><path d="M11.0,12.2 L13.3,12.2 L13.3,9.9 L16.1,9.9 L16.1,12.2 L18.4,12.2 L18.4,15 L16.1,15 L16.1,17.3 L13.3,17.3 L13.3,15 L11.0,15 Z" fill="#fff" stroke="#4a5cc0" stroke-width="0.6"/></g>
<circle cx="745" cy="603.4" r="6.1" fill="#6b675a"/><path d="M741.6,603.4 H748.4 M745,600 V606.8" stroke="#fff" stroke-width="1.5"/>
<rect x="744.1" y="616.8" width="1.8" height="95.6" fill="#d9d3ca"/>
<circle cx="745" cy="692.4" r="7.3" fill="url(#knob)" stroke="#f0743a" stroke-width="1.6"/><rect x="744.3" y="686" width="1.4" height="13" fill="#cfe4ff" opacity="0.9"/>
<circle cx="745" cy="723.6" r="5.2" fill="#6b675a"/><path d="M742.2,723.6 H747.8" stroke="#e8e4d8" stroke-width="1.5"/>
<circle cx="745" cy="749.7" r="11" fill="url(#hb1)" stroke="#9c9484" stroke-width="2.2"/><path transform="translate(745,750.6) scale(1.25)" d="M0,3.2 C-1.2,1.6 -4.6,-0.2 -4.6,-2.4 C-4.6,-4.4 -1.8,-5 0,-2.8 C1.8,-5 4.6,-4.4 4.6,-2.4 C4.6,-0.2 1.2,1.6 0,3.2 Z" fill="#f4f8ff" stroke="#3b62d8" stroke-width="1.2"/>
<circle cx="745" cy="784.2" r="11" fill="url(#hb1)" stroke="#a9c0f4" stroke-width="2.2"/><path d="M745,772.4 V775.6 M745,792.8 V796 M733.2,784.2 H736.4 M753.6,784.2 H756.8" stroke="#4a6ee0" stroke-width="1.2"/><path transform="translate(745,785.2) scale(1.25)" d="M0,3.2 C-1.2,1.6 -4.6,-0.2 -4.6,-2.4 C-4.6,-4.4 -1.8,-5 0,-2.8 C1.8,-5 4.6,-4.4 4.6,-2.4 C4.6,-0.2 1.2,1.6 0,3.2 Z" fill="#f4f8ff" stroke="#3b62d8" stroke-width="1.2"/>
<text x="1151.2" y="20.0" font-size="16" fill="#fff" stroke="#fff" stroke-width="0.45" textLength="105.5" lengthAdjust="spacingAndGlyphs">200,0 mm/sec</text>
<text x="775.0" y="106.6" font-size="16" fill="#fff" stroke="#fff" stroke-width="0.45">R</text>
<text x="770.4" y="126.6" font-size="16" fill="#fff" stroke="#fff" stroke-width="0.45">V5</text>
<text x="776.6" y="238.8" font-size="16" fill="#fff" stroke="#fff" stroke-width="0.45">M</text>
<text x="771.4" y="258.8" font-size="16" fill="#fff" stroke="#fff" stroke-width="0.45" textLength="65.0" lengthAdjust="spacingAndGlyphs">MAP 1-2</text>
<text x="1201.2" y="396.0" font-size="16" fill="#fff" stroke="#fff" stroke-width="0.45" textLength="66.0" lengthAdjust="spacingAndGlyphs">79 mSec</text>
<text x="1194.6" y="777.2" font-size="16" fill="#fff" stroke="#fff" stroke-width="0.45" textLength="40.5" lengthAdjust="spacingAndGlyphs">0 sec</text>
<text x="1014.6" y="765.4" font-size="16" fill="#86e3ea" stroke="#86e3ea" stroke-width="0.45" textLength="37.5" lengthAdjust="spacingAndGlyphs">–200</text>
<text x="1341.2" y="765.4" font-size="16" fill="#86e3ea" stroke="#86e3ea" stroke-width="0.45" textLength="28.0" lengthAdjust="spacingAndGlyphs">200</text>
<text x="727.2" y="586.4" font-size="23" fill="#fff" stroke="#fff" stroke-width="0.45" textLength="47.0" lengthAdjust="spacingAndGlyphs">1,64</text>
</svg>

</body></html>
